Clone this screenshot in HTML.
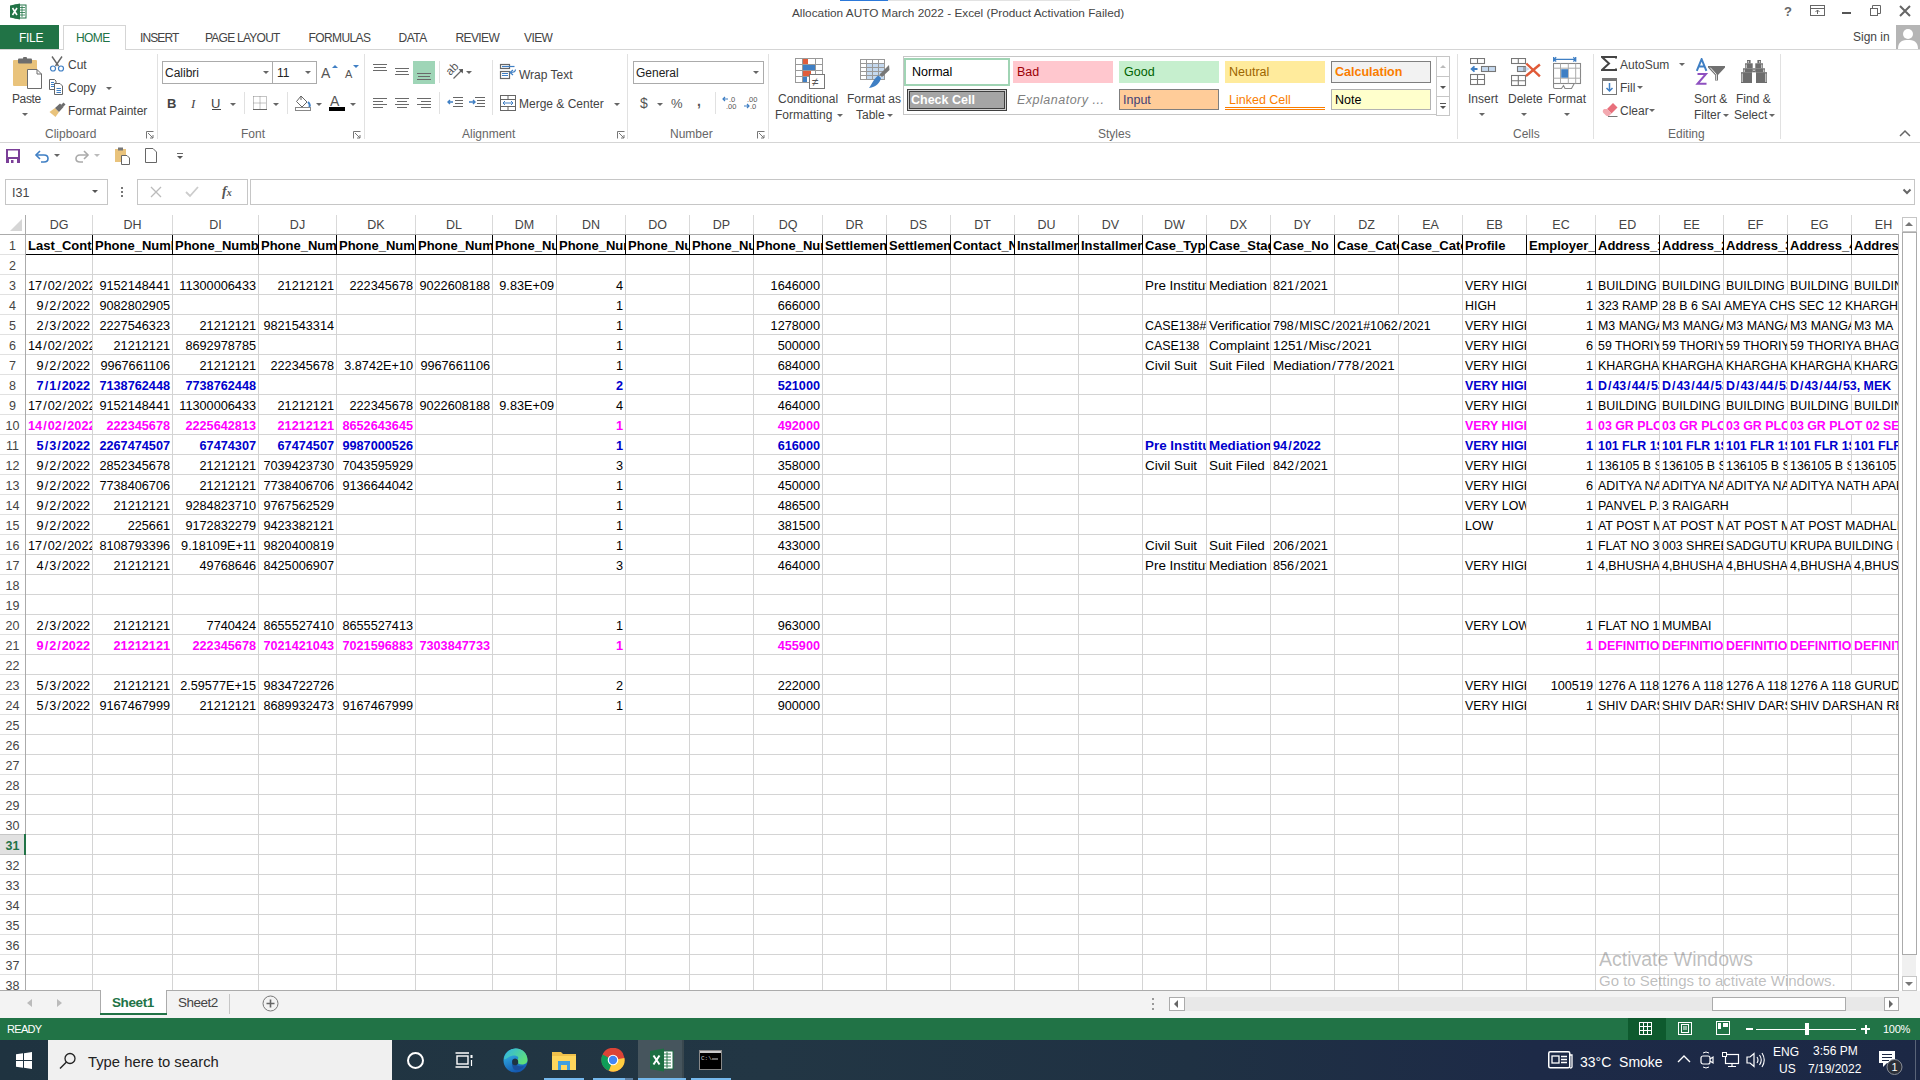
<!DOCTYPE html><html><head><meta charset="utf-8"><title>Excel</title><style>
*{margin:0;padding:0;box-sizing:content-box}
html,body{width:1920px;height:1080px;overflow:hidden;background:#fff;font-family:"Liberation Sans",sans-serif;position:relative}
.a{position:absolute;white-space:nowrap}
.t{position:absolute;white-space:nowrap;font-size:12px;color:#444;line-height:14px}
.vl{position:absolute;width:1px}
.hl{position:absolute;height:1px}
.ch{position:absolute;top:0;height:19px;line-height:20px;text-align:center;font-size:12.5px;color:#444;overflow:hidden}
.rh{position:absolute;left:0;width:25px;height:19px;line-height:22px;text-align:center;font-size:12.5px;color:#444}
.cell{position:absolute;height:19px;overflow:hidden;white-space:nowrap;font-size:12.7px;line-height:23px}
.cell.lc{font-size:13.4px;line-height:22px}
.cell.uc{font-size:12.4px;line-height:23px}
.cell .tl{display:inline-block;background:#fff;padding-left:2px;padding-right:1px;height:19px;vertical-align:top}
.cell.r{text-align:right}
.cell .tr{padding-right:2px}
.b{font-weight:bold}
.sl{padding:0 1px}
.sep{position:absolute;width:1px;background:#e1e1e1}
.dd{position:absolute;width:0;height:0;border-left:3px solid transparent;border-right:3px solid transparent;border-top:3px solid #555}
.box{position:absolute;border:1px solid #ababab;background:#fff}
</style></head><body>
<div class="a" style="left:840px;top:0;width:48px;height:1px;background:#2b78d9"></div>
<div class="a" style="left:888px;top:0;width:192px;height:1px;background:#e3e3e3"></div>
<svg class="a" style="left:10px;top:3px" width="17" height="17" viewBox="0 0 17 17">
<rect x="5" y="2" width="11" height="13" fill="#fff" stroke="#217346" stroke-width="1"/>
<path d="M9 4.5h6M9 7h6M9 9.5h6M9 12h6M12 3v11" stroke="#217346" stroke-width="0.8"/>
<path d="M0 2.5L10 0.5V16.5L0 14.5Z" fill="#217346"/>
<path d="M2.5 5L7 12M7 5L2.5 12" stroke="#fff" stroke-width="1.6"/>
</svg>
<div class="a" style="left:792px;top:6px;font-size:11.8px;line-height:14px;color:#444;">Allocation AUTO March 2022 - Excel (Product Activation Failed)</div>
<div class="a" style="left:1784px;top:4px;font-size:13px;line-height:15px;color:#666;font-weight:bold">?</div>
<svg class="a" style="left:1810px;top:5px" width="16" height="12"><rect x="0.5" y="0.5" width="14" height="10" fill="none" stroke="#666"/><path d="M0.5 3.5H14.5" stroke="#666"/><path d="M7.5 9V5M5.5 7L7.5 5L9.5 7" fill="none" stroke="#666"/></svg>
<div class="a" style="left:1842px;top:12px;width:9px;height:2px;background:#555"></div>
<svg class="a" style="left:1870px;top:5px" width="11" height="11"><rect x="0.5" y="3.5" width="7" height="7" fill="none" stroke="#666"/><path d="M2.5 3.5V0.5H10.5V8.5H7.5" fill="none" stroke="#666"/></svg>
<svg class="a" style="left:1899px;top:5px" width="13" height="12"><path d="M1 1L11 11M11 1L1 11" stroke="#666" stroke-width="2"/></svg>
<div class="a" style="left:0;top:25px;width:59px;height:24px;background:#217346"></div>
<div class="a" style="left:19px;top:31px;font-size:12px;line-height:14px;color:#fff;letter-spacing:-0.3px">FILE</div>
<div class="a" style="left:63px;top:25px;width:61px;height:24px;border:1px solid #d5d5d5;border-bottom:none;background:#fff"></div>
<div class="a" style="left:0;top:49px;width:63px;height:1px;background:#d5d5d5"></div>
<div class="a" style="left:125px;top:49px;width:1795px;height:1px;background:#d5d5d5"></div>
<div class="a" style="left:76px;top:31px;font-size:12px;line-height:14px;color:#217346;letter-spacing:-0.6px">HOME</div>
<div class="a" style="left:140px;top:31px;font-size:12px;line-height:14px;color:#444;letter-spacing:-0.9px">INSERT</div>
<div class="a" style="left:205px;top:31px;font-size:12px;line-height:14px;color:#444;letter-spacing:-0.75px">PAGE LAYOUT</div>
<div class="a" style="left:308.5px;top:31px;font-size:12px;line-height:14px;color:#444;letter-spacing:-0.6px">FORMULAS</div>
<div class="a" style="left:398.5px;top:31px;font-size:12px;line-height:14px;color:#444;letter-spacing:-0.5px">DATA</div>
<div class="a" style="left:455.5px;top:31px;font-size:12px;line-height:14px;color:#444;letter-spacing:-0.6px">REVIEW</div>
<div class="a" style="left:524px;top:31px;font-size:12px;line-height:14px;color:#444;letter-spacing:-0.6px">VIEW</div>
<div class="a" style="left:1853px;top:30px;font-size:12px;line-height:14px;color:#444;">Sign in</div>
<svg class="a" style="left:1896px;top:25px" width="24" height="24"><rect width="24" height="24" fill="#b5b5b5"/><circle cx="12" cy="9" r="5" fill="#fff"/><path d="M2 24C2 16 7 15 12 15S22 16 22 24Z" fill="#fff"/></svg>
<div class="a" style="left:0;top:142px;width:1920px;height:1px;background:#d5d5d5"></div>
<div class="sep" style="left:157px;top:54px;height:85px"></div>
<div class="sep" style="left:364px;top:54px;height:85px"></div>
<div class="sep" style="left:627px;top:54px;height:85px"></div>
<div class="sep" style="left:768px;top:54px;height:85px"></div>
<div class="sep" style="left:1457px;top:54px;height:85px"></div>
<div class="sep" style="left:1593px;top:54px;height:85px"></div>
<div class="sep" style="left:1780px;top:54px;height:85px"></div>
<svg class="a" style="left:12px;top:57px" width="32" height="33" viewBox="0 0 32 33">
<rect x="1" y="3" width="24" height="26" rx="1" fill="#e9c37c"/>
<rect x="6" y="1.5" width="14" height="5" rx="1" fill="#6d6d6d"/><rect x="11" y="0" width="4" height="3" rx="1" fill="#6d6d6d"/>
<path d="M15.5 12.5H25L29.5 17V31.5H15.5Z" fill="#fff" stroke="#6d6d6d"/><path d="M25 12.5V17H29.5" fill="none" stroke="#6d6d6d"/>
</svg>
<div class="a" style="left:12px;top:92px;font-size:12px;line-height:14px;color:#444;letter-spacing:-0.4px">Paste</div>
<div class="dd" style="left:22px;top:113px;border-top-color:#666"></div>
<svg class="a" style="left:49px;top:56px" width="16" height="16" viewBox="0 0 16 16">
<path d="M3 0.5L9.5 10M13 0.5L6.5 10" stroke="#666" stroke-width="1.4"/>
<circle cx="4" cy="12.5" r="2.5" fill="none" stroke="#3f7fc4" stroke-width="1.2"/><circle cx="12" cy="12.5" r="2.5" fill="none" stroke="#3f7fc4" stroke-width="1.2"/>
</svg>
<div class="a" style="left:68px;top:58px;font-size:12px;line-height:14px;color:#444;">Cut</div>
<svg class="a" style="left:48px;top:79px" width="17" height="16" viewBox="0 0 17 16">
<path d="M1.5 0.5H6.5L8 2V10.5H1.5Z" fill="#fff" stroke="#666"/>
<path d="M3 3.5H6M3 5.5H6M3 7.5H6" stroke="#3f7fc4"/>
<path d="M6.5 4.5H12L14.5 7V15.5H6.5Z" fill="#fff" stroke="#666"/>
<path d="M8.5 9.5H13M8.5 11.5H13M8.5 13.5H13" stroke="#3f7fc4"/>
</svg>
<div class="a" style="left:68px;top:81px;font-size:12px;line-height:14px;color:#444;">Copy</div>
<div class="dd" style="left:106px;top:87px;border-top-color:#666"></div>
<svg class="a" style="left:49px;top:102px" width="17" height="16" viewBox="0 0 17 16">
<path d="M0.5 10L6 6L10 10L6.5 15Z" fill="#e9c37c"/>
<path d="M6 6L11 1.5L14.5 5L10 10Z" fill="#6d6d6d"/>
<path d="M12 3L14.5 0.5L16.5 2.5L14 5Z" fill="#6d6d6d"/>
</svg>
<div class="a" style="left:68px;top:104px;font-size:12px;line-height:14px;color:#444;">Format Painter</div>
<div class="a" style="left:45px;top:127px;font-size:12px;line-height:14px;color:#666;">Clipboard</div>
<svg class="a" style="left:146px;top:131px" width="8" height="8"><path d="M0.5 7.5V0.5H7.5" fill="none" stroke="#777"/><path d="M2 2L7 7M4 7H7V4" fill="none" stroke="#777"/></svg>
<div class="box" style="left:162px;top:61px;width:110px;height:21px"></div>
<div class="box" style="left:272px;top:61px;width:43px;height:21px"></div>
<div class="a" style="left:165px;top:66px;font-size:12px;line-height:14px;color:#222;">Calibri</div>
<div class="dd" style="left:263px;top:71px;border-top-color:#666"></div>
<div class="dd" style="left:305px;top:71px;border-top-color:#666"></div>
<div class="a" style="left:277px;top:66px;font-size:12px;line-height:14px;color:#222;">11</div>
<div class="a" style="left:321px;top:65px;font-size:14px;line-height:16px;color:#555;">A</div>
<div class="dd" style="left:332px;top:65px;border-top:none;border-bottom:3px solid #3f7fc4"></div>
<div class="a" style="left:345px;top:68px;font-size:11px;line-height:13px;color:#555;">A</div>
<div class="dd" style="left:353px;top:65px;border-top-color:#3f7fc4"></div>
<div class="a" style="left:167px;top:96px;font-size:13px;line-height:15px;color:#444;font-weight:bold">B</div>
<div class="a" style="left:191px;top:96px;font-size:13px;line-height:15px;color:#444;font-style:italic;font-family:Liberation Serif">I</div>
<div class="a" style="left:211px;top:96px;font-size:13px;line-height:15px;color:#444;">U</div>
<div class="a" style="left:212px;top:109px;width:9px;height:1px;background:#444"></div>
<div class="dd" style="left:230px;top:103px;border-top-color:#666"></div>
<div class="sep" style="left:244px;top:92px;height:22px"></div>
<svg class="a" style="left:253px;top:96px" width="14" height="14"><path d="M0.5 0.5H13.5V13.5M0.5 0.5V13.5M7 0.5V13M0.5 7H13" fill="none" stroke="#888" stroke-dasharray="1 1"/><path d="M0 13.5H14" stroke="#666"/></svg>
<div class="dd" style="left:273px;top:103px;border-top-color:#666"></div>
<div class="sep" style="left:287px;top:92px;height:22px"></div>
<svg class="a" style="left:295px;top:95px" width="17" height="17"><path d="M6 1L12 7L7 12L1.5 6.5Z" fill="#fff" stroke="#666"/><path d="M6 1V5" stroke="#666"/><path d="M13 7C15 9 15 11 14 12" stroke="#3f7fc4" stroke-width="2" fill="none"/><rect x="0.5" y="12.5" width="15" height="3" fill="none" stroke="#888"/></svg>
<div class="dd" style="left:316px;top:103px;border-top-color:#666"></div>
<div class="a" style="left:330px;top:93px;font-size:14px;line-height:16px;color:#555;">A</div>
<div class="a" style="left:329px;top:107px;width:16px;height:4px;background:#000"></div>
<div class="dd" style="left:350px;top:103px;border-top-color:#666"></div>
<div class="a" style="left:241px;top:127px;font-size:12px;line-height:14px;color:#666;">Font</div>
<svg class="a" style="left:353px;top:131px" width="8" height="8"><path d="M0.5 7.5V0.5H7.5" fill="none" stroke="#777"/><path d="M2 2L7 7M4 7H7V4" fill="none" stroke="#777"/></svg>
<svg class="a" style="left:373px;top:64px" width="15" height="10"><path d="M0 0.5H14" stroke="#6a6a6a"/><path d="M1 3.5H13" stroke="#6a6a6a"/><path d="M0 6.5H14" stroke="#6a6a6a"/></svg>
<svg class="a" style="left:395px;top:68px" width="15" height="10"><path d="M0 0.5H14" stroke="#6a6a6a"/><path d="M1 3.5H13" stroke="#6a6a6a"/><path d="M0 6.5H14" stroke="#6a6a6a"/></svg>
<div class="a" style="left:413px;top:61px;width:22px;height:23px;background:#9fd5b7"></div>
<svg class="a" style="left:417px;top:73px" width="15" height="10"><path d="M0 0.5H14" stroke="#6a6a6a"/><path d="M1 3.5H13" stroke="#6a6a6a"/><path d="M0 6.5H14" stroke="#6a6a6a"/></svg>
<div class="sep" style="left:439px;top:61px;height:22px"></div>
<svg class="a" style="left:445px;top:62px" width="20" height="20"><text x="2.5" y="13.5" font-size="11.5" fill="#555" font-family="Liberation Sans" transform="translate(-1.8 -1.8) rotate(-45 7.5 9)">ab</text><path d="M8.5 16.5L17 8" stroke="#666" stroke-width="1.2"/><path d="M13.5 7.2L18 7L17.8 11.5Z" fill="#555"/></svg>
<div class="dd" style="left:466px;top:71px;border-top-color:#666"></div>
<svg class="a" style="left:373px;top:98px" width="15" height="13"><path d="M0 0.5H14" stroke="#6a6a6a"/><path d="M0 3.5H10" stroke="#6a6a6a"/><path d="M0 6.5H14" stroke="#6a6a6a"/><path d="M0 9.5H10" stroke="#6a6a6a"/></svg>
<svg class="a" style="left:395px;top:98px" width="15" height="13"><path d="M0 0.5H14" stroke="#6a6a6a"/><path d="M2 3.5H12" stroke="#6a6a6a"/><path d="M0 6.5H14" stroke="#6a6a6a"/><path d="M2 9.5H12" stroke="#6a6a6a"/></svg>
<svg class="a" style="left:417px;top:98px" width="15" height="13"><path d="M0 0.5H14" stroke="#6a6a6a"/><path d="M4 3.5H14" stroke="#6a6a6a"/><path d="M0 6.5H14" stroke="#6a6a6a"/><path d="M4 9.5H14" stroke="#6a6a6a"/></svg>
<div class="sep" style="left:439px;top:92px;height:22px"></div>
<svg class="a" style="left:447px;top:97px" width="17" height="12"><path d="M6 0.5H16M8 3.5H16M8 6.5H16M6 9.5H16" stroke="#666"/><path d="M1 5H6M3 3L1 5L3 7" fill="none" stroke="#3f7fc4" stroke-width="1.4"/></svg>
<svg class="a" style="left:469px;top:97px" width="17" height="12"><path d="M6 0.5H16M8 3.5H16M8 6.5H16M6 9.5H16" stroke="#666"/><path d="M0 5H6M4 3L6 5L4 7" fill="none" stroke="#3f7fc4" stroke-width="1.4"/></svg>
<div class="sep" style="left:492px;top:60px;height:55px"></div>
<svg class="a" style="left:499px;top:63px" width="18" height="17"><rect x="1.5" y="1.5" width="9" height="4" fill="none" stroke="#666" stroke-width="1.2"/><path d="M3 3.5H15.5" stroke="#3f7fc4" stroke-width="1.2"/><rect x="1.5" y="8.5" width="9" height="7" fill="none" stroke="#666" stroke-width="1.2"/><path d="M3 10.5H9M3 12.5H9" stroke="#3f7fc4" stroke-width="1.1"/><path d="M16.5 6.5C16.5 9 15 9.5 11.5 9.5" fill="none" stroke="#3f7fc4" stroke-width="1.2"/><path d="M14 7L11 9.5L14 12" fill="none" stroke="#3f7fc4" stroke-width="1.2"/></svg>
<div class="a" style="left:519px;top:68px;font-size:12px;line-height:14px;color:#444;">Wrap Text</div>
<svg class="a" style="left:500px;top:95px" width="16" height="16"><rect x="0.5" y="0.5" width="15" height="15" fill="none" stroke="#666"/><path d="M0.5 4.5H15.5M0.5 11.5H15.5M8 0.5V4.5M8 11.5V15.5" stroke="#666"/><path d="M3 8H13M5 6L3 8L5 10M11 6L13 8L11 10" fill="none" stroke="#3f7fc4"/></svg>
<div class="a" style="left:519px;top:97px;font-size:12px;line-height:14px;color:#444;">Merge &amp; Center</div>
<div class="dd" style="left:614px;top:103px;border-top-color:#666"></div>
<div class="a" style="left:462px;top:127px;font-size:12px;line-height:14px;color:#666;">Alignment</div>
<svg class="a" style="left:617px;top:131px" width="8" height="8"><path d="M0.5 7.5V0.5H7.5" fill="none" stroke="#777"/><path d="M2 2L7 7M4 7H7V4" fill="none" stroke="#777"/></svg>
<div class="box" style="left:633px;top:61px;width:129px;height:21px"></div>
<div class="a" style="left:636px;top:66px;font-size:12px;line-height:14px;color:#222;">General</div>
<div class="dd" style="left:753px;top:71px;border-top-color:#666"></div>
<div class="a" style="left:640px;top:95px;font-size:14px;line-height:16px;color:#555;">$</div>
<div class="dd" style="left:657px;top:103px;border-top-color:#666"></div>
<div class="a" style="left:671px;top:96px;font-size:13px;line-height:15px;color:#555;">%</div>
<div class="a" style="left:697px;top:93px;font-size:14px;line-height:16px;color:#555;font-weight:bold">,</div>
<div class="sep" style="left:715px;top:92px;height:22px"></div>
<svg class="a" style="left:722px;top:95px" width="16" height="16"><path d="M1 4H6M3 2L1 4L3 6" fill="none" stroke="#3f7fc4" stroke-width="1.2"/><text x="7" y="7" font-size="7.5" fill="#555" font-family="Liberation Sans">.0</text><text x="4" y="14" font-size="7.5" fill="#555" font-family="Liberation Sans">.00</text></svg>
<svg class="a" style="left:743px;top:95px" width="17" height="16"><text x="4" y="7" font-size="7.5" fill="#555" font-family="Liberation Sans">.00</text><path d="M1 11H6M4 9L6 11L4 13" fill="none" stroke="#3f7fc4" stroke-width="1.2"/><text x="7" y="14" font-size="7.5" fill="#555" font-family="Liberation Sans">.0</text></svg>
<div class="a" style="left:670px;top:127px;font-size:12px;line-height:14px;color:#666;">Number</div>
<svg class="a" style="left:757px;top:131px" width="8" height="8"><path d="M0.5 7.5V0.5H7.5" fill="none" stroke="#777"/><path d="M2 2L7 7M4 7H7V4" fill="none" stroke="#777"/></svg>
<svg class="a" style="left:795px;top:58px" width="31" height="32"><g stroke="#999" fill="none"><rect x="0.5" y="0.5" width="27" height="24"/><path d="M0.5 6.5H27.5M0.5 12.5H27.5M0.5 18.5H27.5M7.5 0.5V24.5M20.5 0.5V24.5"/></g>
<rect x="8" y="1" width="5" height="5" fill="#e15d3b"/><rect x="8" y="7" width="12" height="5" fill="#3f7fc4"/><rect x="8" y="13" width="8" height="5" fill="#e15d3b"/><rect x="8" y="19" width="4" height="5" fill="#3f7fc4"/>
<rect x="14.5" y="16.5" width="15" height="14" fill="#fff" stroke="#777"/><text x="17" y="28" font-size="12" fill="#555" font-family="Liberation Sans">≠</text></svg>
<div class="a" style="left:778px;top:92px;font-size:12px;line-height:14px;color:#444;">Conditional</div>
<div class="a" style="left:775px;top:108px;font-size:12px;line-height:14px;color:#444;">Formatting</div>
<div class="dd" style="left:837px;top:114px;border-top-color:#666"></div>
<svg class="a" style="left:860px;top:59px" width="30" height="30"><rect x="0.5" y="0.5" width="24" height="20" fill="#fff" stroke="#999"/><rect x="6" y="5" width="18" height="15" fill="#c5d9ef"/><g stroke="#999"><path d="M0.5 4.5H24.5M0.5 8.5H24.5M0.5 12.5H24.5M0.5 16.5H24.5M6.5 0.5V20.5M12.5 0.5V20.5M18.5 0.5V20.5"/></g><path d="M29 6L29.5 11L22 18L19.5 15.5Z" fill="#777"/><path d="M18.5 16.5L21 19C20 24 16 28 9 29C12 25 14 19 18.5 16.5Z" fill="#3f7fc4"/></svg>
<div class="a" style="left:847px;top:92px;font-size:12px;line-height:14px;color:#444;">Format as</div>
<div class="a" style="left:856px;top:108px;font-size:12px;line-height:14px;color:#444;">Table</div>
<div class="dd" style="left:887px;top:114px;border-top-color:#666"></div>
<div class="a" style="left:903px;top:56px;width:546px;height:59px;border:1px solid #c6c6c6;background:#fff;box-sizing:border-box"></div>
<div class="a" style="left:904px;top:58px;width:102px;height:24px;border:2px solid #a0d4b4;background:#fff"></div>
<div class="a" style="left:912px;top:65px;font-size:12.5px;line-height:14px;color:#000;">Normal</div>
<div class="a" style="left:1013px;top:61px;width:100px;height:22px;background:#ffc7ce"></div>
<div class="a" style="left:1017px;top:65px;font-size:12.5px;line-height:14px;color:#9c0006;">Bad</div>
<div class="a" style="left:1119px;top:61px;width:100px;height:22px;background:#c6efce"></div>
<div class="a" style="left:1124px;top:65px;font-size:12.5px;line-height:14px;color:#006100;">Good</div>
<div class="a" style="left:1225px;top:61px;width:100px;height:22px;background:#ffeb9c"></div>
<div class="a" style="left:1229px;top:65px;font-size:12.5px;line-height:14px;color:#9c6500;">Neutral</div>
<div class="a" style="left:1331px;top:61px;width:98px;height:20px;background:#f2f2f2;border:1px solid #7f7f7f"></div>
<div class="a" style="left:1335px;top:65px;font-size:12.5px;line-height:14px;color:#fa7d00;font-weight:bold">Calculation</div>
<div class="a" style="left:907px;top:89px;width:98px;height:20px;background:#a5a5a5;border:1px solid #3f3f3f;box-shadow:inset 0 0 0 1px #d0d0d0,inset 0 0 0 2px #3f3f3f"></div>
<div class="a" style="left:911px;top:93px;font-size:12.5px;line-height:14px;color:#fff;font-weight:bold">Check Cell</div>
<div class="a" style="left:1017px;top:93px;font-size:12.5px;line-height:14px;color:#7f7f7f;font-style:italic;letter-spacing:0.5px">Explanatory ...</div>
<div class="a" style="left:1119px;top:89px;width:98px;height:19px;background:#ffcc99;border:1px solid #7f7f7f"></div>
<div class="a" style="left:1123px;top:93px;font-size:12.5px;line-height:14px;color:#3f3f76;">Input</div>
<div class="a" style="left:1229px;top:93px;font-size:12.5px;line-height:14px;color:#fa7d00;">Linked Cell</div>
<div class="a" style="left:1225px;top:107px;width:100px;height:3px;border-top:1px solid #fa7d00;border-bottom:1px solid #fa7d00;box-sizing:border-box"></div>
<div class="a" style="left:1331px;top:89px;width:98px;height:19px;background:#ffffcc;border:1px solid #b2b2b2"></div>
<div class="a" style="left:1335px;top:93px;font-size:12.5px;line-height:14px;color:#000;">Note</div>
<div class="a" style="left:1436px;top:56px;width:12px;height:58px;border:1px solid #c6c6c6;background:#fff"></div>
<div class="a" style="left:1436px;top:76px;width:14px;height:1px;background:#c6c6c6"></div>
<div class="a" style="left:1436px;top:96px;width:14px;height:1px;background:#c6c6c6"></div>
<div class="dd" style="left:1440px;top:65px;border-top:none;border-bottom:3px solid #bbb"></div>
<div class="dd" style="left:1440px;top:86px;border-top-color:#555"></div>
<div class="a" style="left:1440px;top:103px;width:6px;height:1px;background:#555"></div>
<div class="dd" style="left:1440px;top:106px;border-top-color:#555"></div>
<div class="a" style="left:1098px;top:127px;font-size:12px;line-height:14px;color:#666;">Styles</div>
<svg class="a" style="left:1470px;top:58px" width="27" height="28"><g fill="none" stroke="#777" stroke-width="1.1"><rect x="0.5" y="0.5" width="14" height="5"/><path d="M7.5 0.5V5.5"/><rect x="0.5" y="16.5" width="14" height="10"/><path d="M7.5 16.5V26.5M0.5 21.5H14.5"/></g><rect x="11.5" y="8.5" width="14" height="5" fill="#c5d9ef" stroke="#777" stroke-width="1.1"/><path d="M18.5 8.5V13.5" stroke="#777"/><path d="M2 11H7.5M4.5 8.3L1.6 11L4.5 13.7" fill="none" stroke="#3f7fc4" stroke-width="1.8"/></svg>
<div class="a" style="left:1468px;top:92px;font-size:12px;line-height:14px;color:#444;">Insert</div>
<div class="dd" style="left:1479px;top:113px;border-top-color:#666"></div>
<svg class="a" style="left:1511px;top:58px" width="31" height="29"><g fill="none" stroke="#777" stroke-width="1.1"><rect x="0.5" y="0.5" width="14" height="5"/><path d="M7.3 0.5V5.5"/><rect x="0.5" y="17.5" width="14" height="10"/><path d="M7.3 17.5V27.5M0.5 22.7H14.5"/></g><rect x="6.5" y="8.5" width="8" height="5" fill="#c5d9ef" stroke="#777" stroke-width="1.1"/><path d="M14.6 8.5L18.7 11L14.6 13.5Z" fill="#c5d9ef"/><path d="M13 8.5V13.5" stroke="#777"/><path d="M15.3 5.5L28.9 18.3M28.9 6.5L15 18" stroke="#e05a38" stroke-width="2.4"/></svg>
<div class="a" style="left:1508px;top:92px;font-size:12px;line-height:14px;color:#444;">Delete</div>
<div class="dd" style="left:1521px;top:113px;border-top-color:#666"></div>
<svg class="a" style="left:1553px;top:56px" width="29" height="34"><path d="M0.5 3.4H23M0.6 1V5.8M22.7 1V5.8M3.2 1.3L0.9 3.4L3.2 5.5M20.3 1.3L22.6 3.4L20.3 5.5" fill="none" stroke="#3f7fc4" stroke-width="1.3"/><rect x="0.5" y="7.5" width="27" height="20" fill="#fff" stroke="#888" stroke-width="1.1"/><path d="M7.5 7.5V27.5M15.3 7.5V27.5M22.7 7.5V27.5M0.5 12.2H27.5M0.5 22.2H27.5" stroke="#aaa"/><rect x="8.2" y="13.2" width="6.8" height="8.5" fill="#3f7fc4"/><path d="M0.5 27.5V31C0.5 32 1 32.5 2 32.5H8.5L10.5 29.5L12 32.5H18.5L21 28" fill="none" stroke="#888" stroke-width="1.1"/></svg>
<div class="a" style="left:1548px;top:92px;font-size:12px;line-height:14px;color:#444;">Format</div>
<div class="dd" style="left:1564px;top:113px;border-top-color:#666"></div>
<div class="a" style="left:1513px;top:127px;font-size:12px;line-height:14px;color:#666;">Cells</div>
<svg class="a" style="left:1601px;top:56px" width="16" height="15"><path d="M15 2.5V1H1L8 7.5L1 14H15V12.5" fill="none" stroke="#444" stroke-width="2"/></svg>
<div class="a" style="left:1620px;top:58px;font-size:12px;line-height:14px;color:#444;">AutoSum</div>
<div class="dd" style="left:1679px;top:63px;border-top-color:#666"></div>
<svg class="a" style="left:1602px;top:78px" width="15" height="18"><rect x="0.5" y="0.5" width="14" height="16" fill="#fff" stroke="#777"/><rect x="0" y="0" width="15" height="3" fill="#777"/><path d="M7.5 5V13M4.5 10L7.5 13L10.5 10" fill="none" stroke="#3f7fc4" stroke-width="1.5"/></svg>
<div class="a" style="left:1620px;top:81px;font-size:12px;line-height:14px;color:#444;">Fill</div>
<div class="dd" style="left:1637px;top:86px;border-top-color:#666"></div>
<svg class="a" style="left:1602px;top:102px" width="17" height="15"><path d="M5 7L11 1L15.5 5.5L9.5 11.5Z" fill="#e8707c"/><path d="M5 7L9.5 11.5L7.5 13.5C6.5 14.5 5 14.5 4 13.5L1.5 11C0.5 10 0.5 8.5 1.5 7.5L2 7Z" fill="#f3a9b0"/><path d="M6 14.5H15.5" stroke="#777"/></svg>
<div class="a" style="left:1620px;top:104px;font-size:12px;line-height:14px;color:#444;">Clear</div>
<div class="dd" style="left:1649px;top:109px;border-top-color:#666"></div>
<svg class="a" style="left:1695px;top:58px" width="32" height="30"><path d="M1.8 12.8L6.6 1.2L11.4 12.8M3.6 8.6H9.6" fill="none" stroke="#3f7fc4" stroke-width="2"/><path d="M2.5 16H11L2.5 25.8H11.5" fill="none" stroke="#8e50c0" stroke-width="2"/><path d="M13 8H30V9.5L23 17V22.5H20V17L13 9.5Z" fill="#707070"/><path d="M15.2 9.6L21.3 16.3V22" fill="none" stroke="#fff" stroke-width="0.9"/></svg>
<div class="a" style="left:1694px;top:92px;font-size:12px;line-height:14px;color:#444;">Sort &amp;</div>
<div class="a" style="left:1694px;top:108px;font-size:12px;line-height:14px;color:#444;">Filter</div>
<div class="dd" style="left:1723px;top:114px;border-top-color:#666"></div>
<svg class="a" style="left:1740px;top:59px" width="28" height="25"><g fill="#6d6d6d"><rect x="7" y="1" width="3.6" height="3.4"/><rect x="5" y="4.3" width="7.7" height="5.1"/><rect x="3" y="9.3" width="9.7" height="4"/><rect x="1" y="13.2" width="11" height="10.8"/><rect x="17.4" y="1" width="3.6" height="3.4"/><rect x="15.3" y="4.3" width="7.7" height="5.1"/><rect x="15.3" y="9.3" width="9.7" height="4"/><rect x="16" y="13.2" width="11" height="10.8"/><rect x="12.5" y="9.3" width="3" height="4"/></g><g stroke="#fff" stroke-width="0.8"><path d="M2.2 14.5V23M4.2 10.5V13M6.2 5.5V9M8.3 2V3.8M25.8 14.5V23M23.8 10.5V13M21.8 5.5V9M19.7 2V3.8M13 11.2H15"/></g></svg>
<div class="a" style="left:1736px;top:92px;font-size:12px;line-height:14px;color:#444;">Find &amp;</div>
<div class="a" style="left:1734px;top:108px;font-size:12px;line-height:14px;color:#444;">Select</div>
<div class="dd" style="left:1769px;top:114px;border-top-color:#666"></div>
<div class="a" style="left:1668px;top:127px;font-size:12px;line-height:14px;color:#666;">Editing</div>
<svg class="a" style="left:1899px;top:129px" width="12" height="8"><path d="M1 7L6 2L11 7" fill="none" stroke="#666" stroke-width="1.5"/></svg>
<svg class="a" style="left:6px;top:149px" width="15" height="15"><path d="M0 0H14V14H0Z" fill="#7b3f98"/><rect x="2" y="1.5" width="10" height="6.5" fill="#fff"/><rect x="3" y="10" width="8" height="4" fill="#fff"/><rect x="5" y="11" width="2.5" height="3" fill="#7b3f98"/></svg>
<svg class="a" style="left:34px;top:148px" width="16" height="15"><path d="M3 7H10C13 7 14 9 14 10.5C14 13 12 14 10 14H7" fill="none" stroke="#3f7fc4" stroke-width="1.6"/><path d="M6 3L2 7L6 11" fill="none" stroke="#3f7fc4" stroke-width="1.6"/></svg>
<div class="dd" style="left:54px;top:154px;border-top-color:#666"></div>
<svg class="a" style="left:74px;top:148px" width="16" height="15"><path d="M13 7H6C3 7 2 9 2 10.5C2 13 4 14 6 14H9" fill="none" stroke="#aaa" stroke-width="1.6"/><path d="M10 3L14 7L10 11" fill="none" stroke="#aaa" stroke-width="1.6"/></svg>
<div class="dd" style="left:94px;top:154px;border-top-color:#bbb"></div>
<svg class="a" style="left:114px;top:147px" width="17" height="18"><rect x="1" y="2" width="11" height="13" fill="#e9c37c"/><rect x="4" y="0.5" width="5" height="3" fill="#777"/><path d="M7.5 8.5H13L15.5 11V17.5H7.5Z" fill="#fff" stroke="#666"/></svg>
<svg class="a" style="left:145px;top:148px" width="12" height="15"><path d="M0.5 0.5H8L11.5 4V14.5H0.5Z" fill="#fff" stroke="#666"/></svg>
<svg class="a" style="left:176px;top:152px" width="8" height="8"><path d="M1 1.5H7" stroke="#666"/><path d="M1 4H7L4 7Z" fill="#555"/></svg>
<div class="a" style="left:5px;top:179px;width:101px;height:24px;border:1px solid #c6c6c6;background:#fff"></div>
<div class="a" style="left:12px;top:186px;font-size:12.5px;line-height:14px;color:#444;">I31</div>
<div class="dd" style="left:92px;top:190px;border-top-color:#555"></div>
<div class="a" style="left:121px;top:187px;width:2px;height:2px;background:#777"></div><div class="a" style="left:121px;top:191px;width:2px;height:2px;background:#777"></div><div class="a" style="left:121px;top:195px;width:2px;height:2px;background:#777"></div>
<div class="a" style="left:137px;top:179px;width:109px;height:24px;border:1px solid #c6c6c6;background:#fff"></div>
<svg class="a" style="left:150px;top:186px" width="12" height="12"><path d="M1 1L11 11M11 1L1 11" stroke="#bbb" stroke-width="1.3"/></svg>
<svg class="a" style="left:185px;top:186px" width="14" height="12"><path d="M1 6L5 10L13 1" fill="none" stroke="#ccc" stroke-width="1.8"/></svg>
<div class="a" style="left:222px;top:184px;font-size:14px;line-height:16px;color:#555;font-style:italic;font-family:Liberation Serif;font-weight:bold">f<span style="font-size:10px">x</span></div>
<div class="a" style="left:250px;top:179px;width:1663px;height:24px;border:1px solid #c6c6c6;background:#fff"></div>
<svg class="a" style="left:1902px;top:188px" width="10" height="8"><path d="M1.5 1.5L5 5L8.5 1.5" fill="none" stroke="#666" stroke-width="2"/></svg>
<div id="grid" style="position:absolute;left:0;top:215px;width:1899px;height:776px;overflow:hidden;background:#fff">
<svg style="position:absolute;left:9px;top:3px" width="14" height="14"><polygon points="13,1 13,13 1,13" fill="#d6d6d6"/></svg>
<div class="ch" style="left:26px;width:66px">DG</div>
<div class="ch" style="left:93px;width:79px">DH</div>
<div class="vl" style="left:92px;top:0px;height:19px;background:#d9d9d9"></div>
<div class="ch" style="left:173px;width:85px">DI</div>
<div class="vl" style="left:172px;top:0px;height:19px;background:#d9d9d9"></div>
<div class="ch" style="left:259px;width:77px">DJ</div>
<div class="vl" style="left:258px;top:0px;height:19px;background:#d9d9d9"></div>
<div class="ch" style="left:337px;width:78px">DK</div>
<div class="vl" style="left:336px;top:0px;height:19px;background:#d9d9d9"></div>
<div class="ch" style="left:416px;width:76px">DL</div>
<div class="vl" style="left:415px;top:0px;height:19px;background:#d9d9d9"></div>
<div class="ch" style="left:493px;width:63px">DM</div>
<div class="vl" style="left:492px;top:0px;height:19px;background:#d9d9d9"></div>
<div class="ch" style="left:557px;width:68px">DN</div>
<div class="vl" style="left:556px;top:0px;height:19px;background:#d9d9d9"></div>
<div class="ch" style="left:626px;width:63px">DO</div>
<div class="vl" style="left:625px;top:0px;height:19px;background:#d9d9d9"></div>
<div class="ch" style="left:690px;width:63px">DP</div>
<div class="vl" style="left:689px;top:0px;height:19px;background:#d9d9d9"></div>
<div class="ch" style="left:754px;width:68px">DQ</div>
<div class="vl" style="left:753px;top:0px;height:19px;background:#d9d9d9"></div>
<div class="ch" style="left:823px;width:63px">DR</div>
<div class="vl" style="left:822px;top:0px;height:19px;background:#d9d9d9"></div>
<div class="ch" style="left:887px;width:63px">DS</div>
<div class="vl" style="left:886px;top:0px;height:19px;background:#d9d9d9"></div>
<div class="ch" style="left:951px;width:63px">DT</div>
<div class="vl" style="left:950px;top:0px;height:19px;background:#d9d9d9"></div>
<div class="ch" style="left:1015px;width:63px">DU</div>
<div class="vl" style="left:1014px;top:0px;height:19px;background:#d9d9d9"></div>
<div class="ch" style="left:1079px;width:63px">DV</div>
<div class="vl" style="left:1078px;top:0px;height:19px;background:#d9d9d9"></div>
<div class="ch" style="left:1143px;width:63px">DW</div>
<div class="vl" style="left:1142px;top:0px;height:19px;background:#d9d9d9"></div>
<div class="ch" style="left:1207px;width:63px">DX</div>
<div class="vl" style="left:1206px;top:0px;height:19px;background:#d9d9d9"></div>
<div class="ch" style="left:1271px;width:63px">DY</div>
<div class="vl" style="left:1270px;top:0px;height:19px;background:#d9d9d9"></div>
<div class="ch" style="left:1335px;width:63px">DZ</div>
<div class="vl" style="left:1334px;top:0px;height:19px;background:#d9d9d9"></div>
<div class="ch" style="left:1399px;width:63px">EA</div>
<div class="vl" style="left:1398px;top:0px;height:19px;background:#d9d9d9"></div>
<div class="ch" style="left:1463px;width:63px">EB</div>
<div class="vl" style="left:1462px;top:0px;height:19px;background:#d9d9d9"></div>
<div class="ch" style="left:1527px;width:68px">EC</div>
<div class="vl" style="left:1526px;top:0px;height:19px;background:#d9d9d9"></div>
<div class="ch" style="left:1596px;width:63px">ED</div>
<div class="vl" style="left:1595px;top:0px;height:19px;background:#d9d9d9"></div>
<div class="ch" style="left:1660px;width:63px">EE</div>
<div class="vl" style="left:1659px;top:0px;height:19px;background:#d9d9d9"></div>
<div class="ch" style="left:1724px;width:63px">EF</div>
<div class="vl" style="left:1723px;top:0px;height:19px;background:#d9d9d9"></div>
<div class="ch" style="left:1788px;width:63px">EG</div>
<div class="vl" style="left:1787px;top:0px;height:19px;background:#d9d9d9"></div>
<div class="ch" style="left:1852px;width:63px">EH</div>
<div class="vl" style="left:1851px;top:0px;height:19px;background:#d9d9d9"></div>
<div class="hl" style="left:0;top:19px;width:1898px;background:#ababab"></div>
<div class="vl" style="left:25px;top:0px;height:775px;background:#ababab"></div>
<div class="vl" style="left:92px;top:20px;height:756px;background:#d4d4d4"></div>
<div class="vl" style="left:172px;top:20px;height:756px;background:#d4d4d4"></div>
<div class="vl" style="left:258px;top:20px;height:756px;background:#d4d4d4"></div>
<div class="vl" style="left:336px;top:20px;height:756px;background:#d4d4d4"></div>
<div class="vl" style="left:415px;top:20px;height:756px;background:#d4d4d4"></div>
<div class="vl" style="left:492px;top:20px;height:756px;background:#d4d4d4"></div>
<div class="vl" style="left:556px;top:20px;height:756px;background:#d4d4d4"></div>
<div class="vl" style="left:625px;top:20px;height:756px;background:#d4d4d4"></div>
<div class="vl" style="left:689px;top:20px;height:756px;background:#d4d4d4"></div>
<div class="vl" style="left:753px;top:20px;height:756px;background:#d4d4d4"></div>
<div class="vl" style="left:822px;top:20px;height:756px;background:#d4d4d4"></div>
<div class="vl" style="left:886px;top:20px;height:756px;background:#d4d4d4"></div>
<div class="vl" style="left:950px;top:20px;height:756px;background:#d4d4d4"></div>
<div class="vl" style="left:1014px;top:20px;height:756px;background:#d4d4d4"></div>
<div class="vl" style="left:1078px;top:20px;height:756px;background:#d4d4d4"></div>
<div class="vl" style="left:1142px;top:20px;height:756px;background:#d4d4d4"></div>
<div class="vl" style="left:1206px;top:20px;height:756px;background:#d4d4d4"></div>
<div class="vl" style="left:1270px;top:20px;height:756px;background:#d4d4d4"></div>
<div class="vl" style="left:1334px;top:20px;height:756px;background:#d4d4d4"></div>
<div class="vl" style="left:1398px;top:20px;height:756px;background:#d4d4d4"></div>
<div class="vl" style="left:1462px;top:20px;height:756px;background:#d4d4d4"></div>
<div class="vl" style="left:1526px;top:20px;height:756px;background:#d4d4d4"></div>
<div class="vl" style="left:1595px;top:20px;height:756px;background:#d4d4d4"></div>
<div class="vl" style="left:1659px;top:20px;height:756px;background:#d4d4d4"></div>
<div class="vl" style="left:1723px;top:20px;height:756px;background:#d4d4d4"></div>
<div class="vl" style="left:1787px;top:20px;height:756px;background:#d4d4d4"></div>
<div class="vl" style="left:1851px;top:20px;height:756px;background:#d4d4d4"></div>
<div class="hl" style="left:26px;top:39px;width:1872px;background:#d4d4d4"></div>
<div class="hl" style="left:0px;top:39px;width:25px;background:#e1e1e1"></div>
<div class="rh" style="top:20px">1</div>
<div class="hl" style="left:26px;top:59px;width:1872px;background:#d4d4d4"></div>
<div class="hl" style="left:0px;top:59px;width:25px;background:#e1e1e1"></div>
<div class="rh" style="top:40px">2</div>
<div class="hl" style="left:26px;top:79px;width:1872px;background:#d4d4d4"></div>
<div class="hl" style="left:0px;top:79px;width:25px;background:#e1e1e1"></div>
<div class="rh" style="top:60px">3</div>
<div class="hl" style="left:26px;top:99px;width:1872px;background:#d4d4d4"></div>
<div class="hl" style="left:0px;top:99px;width:25px;background:#e1e1e1"></div>
<div class="rh" style="top:80px">4</div>
<div class="hl" style="left:26px;top:119px;width:1872px;background:#d4d4d4"></div>
<div class="hl" style="left:0px;top:119px;width:25px;background:#e1e1e1"></div>
<div class="rh" style="top:100px">5</div>
<div class="hl" style="left:26px;top:139px;width:1872px;background:#d4d4d4"></div>
<div class="hl" style="left:0px;top:139px;width:25px;background:#e1e1e1"></div>
<div class="rh" style="top:120px">6</div>
<div class="hl" style="left:26px;top:159px;width:1872px;background:#d4d4d4"></div>
<div class="hl" style="left:0px;top:159px;width:25px;background:#e1e1e1"></div>
<div class="rh" style="top:140px">7</div>
<div class="hl" style="left:26px;top:179px;width:1872px;background:#d4d4d4"></div>
<div class="hl" style="left:0px;top:179px;width:25px;background:#e1e1e1"></div>
<div class="rh" style="top:160px">8</div>
<div class="hl" style="left:26px;top:199px;width:1872px;background:#d4d4d4"></div>
<div class="hl" style="left:0px;top:199px;width:25px;background:#e1e1e1"></div>
<div class="rh" style="top:180px">9</div>
<div class="hl" style="left:26px;top:219px;width:1872px;background:#d4d4d4"></div>
<div class="hl" style="left:0px;top:219px;width:25px;background:#e1e1e1"></div>
<div class="rh" style="top:200px">10</div>
<div class="hl" style="left:26px;top:239px;width:1872px;background:#d4d4d4"></div>
<div class="hl" style="left:0px;top:239px;width:25px;background:#e1e1e1"></div>
<div class="rh" style="top:220px">11</div>
<div class="hl" style="left:26px;top:259px;width:1872px;background:#d4d4d4"></div>
<div class="hl" style="left:0px;top:259px;width:25px;background:#e1e1e1"></div>
<div class="rh" style="top:240px">12</div>
<div class="hl" style="left:26px;top:279px;width:1872px;background:#d4d4d4"></div>
<div class="hl" style="left:0px;top:279px;width:25px;background:#e1e1e1"></div>
<div class="rh" style="top:260px">13</div>
<div class="hl" style="left:26px;top:299px;width:1872px;background:#d4d4d4"></div>
<div class="hl" style="left:0px;top:299px;width:25px;background:#e1e1e1"></div>
<div class="rh" style="top:280px">14</div>
<div class="hl" style="left:26px;top:319px;width:1872px;background:#d4d4d4"></div>
<div class="hl" style="left:0px;top:319px;width:25px;background:#e1e1e1"></div>
<div class="rh" style="top:300px">15</div>
<div class="hl" style="left:26px;top:339px;width:1872px;background:#d4d4d4"></div>
<div class="hl" style="left:0px;top:339px;width:25px;background:#e1e1e1"></div>
<div class="rh" style="top:320px">16</div>
<div class="hl" style="left:26px;top:359px;width:1872px;background:#d4d4d4"></div>
<div class="hl" style="left:0px;top:359px;width:25px;background:#e1e1e1"></div>
<div class="rh" style="top:340px">17</div>
<div class="hl" style="left:26px;top:379px;width:1872px;background:#d4d4d4"></div>
<div class="hl" style="left:0px;top:379px;width:25px;background:#e1e1e1"></div>
<div class="rh" style="top:360px">18</div>
<div class="hl" style="left:26px;top:399px;width:1872px;background:#d4d4d4"></div>
<div class="hl" style="left:0px;top:399px;width:25px;background:#e1e1e1"></div>
<div class="rh" style="top:380px">19</div>
<div class="hl" style="left:26px;top:419px;width:1872px;background:#d4d4d4"></div>
<div class="hl" style="left:0px;top:419px;width:25px;background:#e1e1e1"></div>
<div class="rh" style="top:400px">20</div>
<div class="hl" style="left:26px;top:439px;width:1872px;background:#d4d4d4"></div>
<div class="hl" style="left:0px;top:439px;width:25px;background:#e1e1e1"></div>
<div class="rh" style="top:420px">21</div>
<div class="hl" style="left:26px;top:459px;width:1872px;background:#d4d4d4"></div>
<div class="hl" style="left:0px;top:459px;width:25px;background:#e1e1e1"></div>
<div class="rh" style="top:440px">22</div>
<div class="hl" style="left:26px;top:479px;width:1872px;background:#d4d4d4"></div>
<div class="hl" style="left:0px;top:479px;width:25px;background:#e1e1e1"></div>
<div class="rh" style="top:460px">23</div>
<div class="hl" style="left:26px;top:499px;width:1872px;background:#d4d4d4"></div>
<div class="hl" style="left:0px;top:499px;width:25px;background:#e1e1e1"></div>
<div class="rh" style="top:480px">24</div>
<div class="hl" style="left:26px;top:519px;width:1872px;background:#d4d4d4"></div>
<div class="hl" style="left:0px;top:519px;width:25px;background:#e1e1e1"></div>
<div class="rh" style="top:500px">25</div>
<div class="hl" style="left:26px;top:539px;width:1872px;background:#d4d4d4"></div>
<div class="hl" style="left:0px;top:539px;width:25px;background:#e1e1e1"></div>
<div class="rh" style="top:520px">26</div>
<div class="hl" style="left:26px;top:559px;width:1872px;background:#d4d4d4"></div>
<div class="hl" style="left:0px;top:559px;width:25px;background:#e1e1e1"></div>
<div class="rh" style="top:540px">27</div>
<div class="hl" style="left:26px;top:579px;width:1872px;background:#d4d4d4"></div>
<div class="hl" style="left:0px;top:579px;width:25px;background:#e1e1e1"></div>
<div class="rh" style="top:560px">28</div>
<div class="hl" style="left:26px;top:599px;width:1872px;background:#d4d4d4"></div>
<div class="hl" style="left:0px;top:599px;width:25px;background:#e1e1e1"></div>
<div class="rh" style="top:580px">29</div>
<div class="hl" style="left:26px;top:619px;width:1872px;background:#d4d4d4"></div>
<div class="hl" style="left:0px;top:619px;width:25px;background:#e1e1e1"></div>
<div class="rh" style="top:600px">30</div>
<div class="hl" style="left:26px;top:639px;width:1872px;background:#d4d4d4"></div>
<div class="hl" style="left:0px;top:639px;width:25px;background:#e1e1e1"></div>
<div style="position:absolute;left:0;top:619px;width:25px;height:21px;background:#e1e1e1;border-top:1px solid #c6c6c6;border-bottom:1px solid #c6c6c6;box-sizing:border-box"></div>
<div style="position:absolute;left:24px;top:619px;width:2px;height:21px;background:#217346"></div>
<div class="rh" style="top:620px;color:#217346;font-weight:bold">31</div>
<div class="hl" style="left:26px;top:659px;width:1872px;background:#d4d4d4"></div>
<div class="hl" style="left:0px;top:659px;width:25px;background:#e1e1e1"></div>
<div class="rh" style="top:640px">32</div>
<div class="hl" style="left:26px;top:679px;width:1872px;background:#d4d4d4"></div>
<div class="hl" style="left:0px;top:679px;width:25px;background:#e1e1e1"></div>
<div class="rh" style="top:660px">33</div>
<div class="hl" style="left:26px;top:699px;width:1872px;background:#d4d4d4"></div>
<div class="hl" style="left:0px;top:699px;width:25px;background:#e1e1e1"></div>
<div class="rh" style="top:680px">34</div>
<div class="hl" style="left:26px;top:719px;width:1872px;background:#d4d4d4"></div>
<div class="hl" style="left:0px;top:719px;width:25px;background:#e1e1e1"></div>
<div class="rh" style="top:700px">35</div>
<div class="hl" style="left:26px;top:739px;width:1872px;background:#d4d4d4"></div>
<div class="hl" style="left:0px;top:739px;width:25px;background:#e1e1e1"></div>
<div class="rh" style="top:720px">36</div>
<div class="hl" style="left:26px;top:759px;width:1872px;background:#d4d4d4"></div>
<div class="hl" style="left:0px;top:759px;width:25px;background:#e1e1e1"></div>
<div class="rh" style="top:740px">37</div>
<div class="hl" style="left:26px;top:779px;width:1872px;background:#d4d4d4"></div>
<div class="hl" style="left:0px;top:779px;width:25px;background:#e1e1e1"></div>
<div class="rh" style="top:760px">38</div>
<div class="vl" style="left:1898px;top:19px;height:757px;background:#ababab"></div>
<div class="hl" style="left:0px;top:775px;width:1899px;background:#ababab"></div>
<div class="hl" style="left:26px;top:39px;width:1872px;background:#000"></div>
<div class="cell b lc" style="left:26px;top:20px;width:66px;color:#000;font-size:13px"><span class="tl">Last_Contact_Date</span></div>
<div class="vl" style="left:92px;top:20px;height:20px;background:#000"></div>
<div class="cell b lc" style="left:93px;top:20px;width:79px;color:#000;font-size:13px"><span class="tl">Phone_Number_1</span></div>
<div class="vl" style="left:172px;top:20px;height:20px;background:#000"></div>
<div class="cell b lc" style="left:173px;top:20px;width:85px;color:#000;font-size:13px"><span class="tl">Phone_Number_2</span></div>
<div class="vl" style="left:258px;top:20px;height:20px;background:#000"></div>
<div class="cell b lc" style="left:259px;top:20px;width:77px;color:#000;font-size:13px"><span class="tl">Phone_Number_3</span></div>
<div class="vl" style="left:336px;top:20px;height:20px;background:#000"></div>
<div class="cell b lc" style="left:337px;top:20px;width:78px;color:#000;font-size:13px"><span class="tl">Phone_Number_4</span></div>
<div class="vl" style="left:415px;top:20px;height:20px;background:#000"></div>
<div class="cell b lc" style="left:416px;top:20px;width:76px;color:#000;font-size:13px"><span class="tl">Phone_Number_5</span></div>
<div class="vl" style="left:492px;top:20px;height:20px;background:#000"></div>
<div class="cell b lc" style="left:493px;top:20px;width:63px;color:#000;font-size:13px"><span class="tl">Phone_Number_6</span></div>
<div class="vl" style="left:556px;top:20px;height:20px;background:#000"></div>
<div class="cell b lc" style="left:557px;top:20px;width:68px;color:#000;font-size:13px"><span class="tl">Phone_Number_7</span></div>
<div class="vl" style="left:625px;top:20px;height:20px;background:#000"></div>
<div class="cell b lc" style="left:626px;top:20px;width:63px;color:#000;font-size:13px"><span class="tl">Phone_Number_8</span></div>
<div class="vl" style="left:689px;top:20px;height:20px;background:#000"></div>
<div class="cell b lc" style="left:690px;top:20px;width:63px;color:#000;font-size:13px"><span class="tl">Phone_Number_9</span></div>
<div class="vl" style="left:753px;top:20px;height:20px;background:#000"></div>
<div class="cell b lc" style="left:754px;top:20px;width:68px;color:#000;font-size:13px"><span class="tl">Phone_Number_10</span></div>
<div class="vl" style="left:822px;top:20px;height:20px;background:#000"></div>
<div class="cell b lc" style="left:823px;top:20px;width:63px;color:#000;font-size:13px"><span class="tl">Settlement_Amount</span></div>
<div class="vl" style="left:886px;top:20px;height:20px;background:#000"></div>
<div class="cell b lc" style="left:887px;top:20px;width:63px;color:#000;font-size:13px"><span class="tl">Settlement_Date</span></div>
<div class="vl" style="left:950px;top:20px;height:20px;background:#000"></div>
<div class="cell b lc" style="left:951px;top:20px;width:63px;color:#000;font-size:13px"><span class="tl">Contact_Name</span></div>
<div class="vl" style="left:1014px;top:20px;height:20px;background:#000"></div>
<div class="cell b lc" style="left:1015px;top:20px;width:63px;color:#000;font-size:13px"><span class="tl">Installment_1</span></div>
<div class="vl" style="left:1078px;top:20px;height:20px;background:#000"></div>
<div class="cell b lc" style="left:1079px;top:20px;width:63px;color:#000;font-size:13px"><span class="tl">Installment_2</span></div>
<div class="vl" style="left:1142px;top:20px;height:20px;background:#000"></div>
<div class="cell b lc" style="left:1143px;top:20px;width:63px;color:#000;font-size:13px"><span class="tl">Case_Type</span></div>
<div class="vl" style="left:1206px;top:20px;height:20px;background:#000"></div>
<div class="cell b lc" style="left:1207px;top:20px;width:63px;color:#000;font-size:13px"><span class="tl">Case_Stage</span></div>
<div class="vl" style="left:1270px;top:20px;height:20px;background:#000"></div>
<div class="cell b lc" style="left:1271px;top:20px;width:63px;color:#000;font-size:13px"><span class="tl">Case_No</span></div>
<div class="vl" style="left:1334px;top:20px;height:20px;background:#000"></div>
<div class="cell b lc" style="left:1335px;top:20px;width:63px;color:#000;font-size:13px"><span class="tl">Case_Category</span></div>
<div class="vl" style="left:1398px;top:20px;height:20px;background:#000"></div>
<div class="cell b lc" style="left:1399px;top:20px;width:63px;color:#000;font-size:13px"><span class="tl">Case_Category2</span></div>
<div class="vl" style="left:1462px;top:20px;height:20px;background:#000"></div>
<div class="cell b lc" style="left:1463px;top:20px;width:63px;color:#000;font-size:13px"><span class="tl">Profile</span></div>
<div class="vl" style="left:1526px;top:20px;height:20px;background:#000"></div>
<div class="cell b lc" style="left:1527px;top:20px;width:68px;color:#000;font-size:13px"><span class="tl">Employer_Type</span></div>
<div class="vl" style="left:1595px;top:20px;height:20px;background:#000"></div>
<div class="cell b lc" style="left:1596px;top:20px;width:63px;color:#000;font-size:13px"><span class="tl">Address_1</span></div>
<div class="vl" style="left:1659px;top:20px;height:20px;background:#000"></div>
<div class="cell b lc" style="left:1660px;top:20px;width:63px;color:#000;font-size:13px"><span class="tl">Address_2</span></div>
<div class="vl" style="left:1723px;top:20px;height:20px;background:#000"></div>
<div class="cell b lc" style="left:1724px;top:20px;width:63px;color:#000;font-size:13px"><span class="tl">Address_3</span></div>
<div class="vl" style="left:1787px;top:20px;height:20px;background:#000"></div>
<div class="cell b lc" style="left:1788px;top:20px;width:63px;color:#000;font-size:13px"><span class="tl">Address_4</span></div>
<div class="vl" style="left:1851px;top:20px;height:20px;background:#000"></div>
<div class="cell b lc" style="left:1852px;top:20px;width:46px;color:#000;font-size:13px"><span class="tl">Address_5</span></div>
<div class="cell" style="left:26px;top:60px;width:66px;color:#000"><span class="tl">17<span class="sl">/</span>02<span class="sl">/</span>2022</span></div>
<div class="cell r" style="left:93px;top:60px;width:79px;color:#000"><span class="tr">9152148441</span></div>
<div class="cell r" style="left:173px;top:60px;width:85px;color:#000"><span class="tr">11300006433</span></div>
<div class="cell r" style="left:259px;top:60px;width:77px;color:#000"><span class="tr">21212121</span></div>
<div class="cell r" style="left:337px;top:60px;width:78px;color:#000"><span class="tr">222345678</span></div>
<div class="cell r" style="left:416px;top:60px;width:76px;color:#000"><span class="tr">9022608188</span></div>
<div class="cell r" style="left:493px;top:60px;width:63px;color:#000"><span class="tr">9.83E+09</span></div>
<div class="cell r" style="left:557px;top:60px;width:68px;color:#000"><span class="tr">4</span></div>
<div class="cell r" style="left:754px;top:60px;width:68px;color:#000"><span class="tr">1646000</span></div>
<div class="cell lc" style="left:1143px;top:60px;width:63px;color:#000"><span class="tl">Pre Institution</span></div>
<div class="cell lc" style="left:1207px;top:60px;width:63px;color:#000"><span class="tl">Mediation</span></div>
<div class="cell" style="left:1271px;top:60px;width:191px;color:#000"><span class="tl">821<span class="sl">/</span>2021</span></div>
<div class="cell uc" style="left:1463px;top:60px;width:63px;color:#000"><span class="tl">VERY HIGH</span></div>
<div class="cell r" style="left:1527px;top:60px;width:68px;color:#000"><span class="tr">1</span></div>
<div class="cell uc" style="left:1596px;top:60px;width:63px;color:#000"><span class="tl">BUILDING NO</span></div>
<div class="cell uc" style="left:1660px;top:60px;width:63px;color:#000"><span class="tl">BUILDING NO</span></div>
<div class="cell uc" style="left:1724px;top:60px;width:63px;color:#000"><span class="tl">BUILDING NO</span></div>
<div class="cell uc" style="left:1788px;top:60px;width:63px;color:#000"><span class="tl">BUILDING NO</span></div>
<div class="cell uc" style="left:1852px;top:60px;width:46px;color:#000"><span class="tl">BUILDING NO</span></div>
<div class="cell r" style="left:26px;top:80px;width:66px;color:#000"><span class="tr">9<span class="sl">/</span>2<span class="sl">/</span>2022</span></div>
<div class="cell r" style="left:93px;top:80px;width:79px;color:#000"><span class="tr">9082802905</span></div>
<div class="cell r" style="left:557px;top:80px;width:68px;color:#000"><span class="tr">1</span></div>
<div class="cell r" style="left:754px;top:80px;width:68px;color:#000"><span class="tr">666000</span></div>
<div class="cell uc" style="left:1463px;top:80px;width:63px;color:#000"><span class="tl">HIGH</span></div>
<div class="cell r" style="left:1527px;top:80px;width:68px;color:#000"><span class="tr">1</span></div>
<div class="cell uc" style="left:1596px;top:80px;width:63px;color:#000"><span class="tl">323 RAMP</span></div>
<div class="cell uc" style="left:1660px;top:80px;width:238px;color:#000"><span class="tl">28 B 6 SAI AMEYA CHS SEC 12 KHARGHAR</span></div>
<div class="cell r" style="left:26px;top:100px;width:66px;color:#000"><span class="tr">2<span class="sl">/</span>3<span class="sl">/</span>2022</span></div>
<div class="cell r" style="left:93px;top:100px;width:79px;color:#000"><span class="tr">2227546323</span></div>
<div class="cell r" style="left:173px;top:100px;width:85px;color:#000"><span class="tr">21212121</span></div>
<div class="cell r" style="left:259px;top:100px;width:77px;color:#000"><span class="tr">9821543314</span></div>
<div class="cell r" style="left:557px;top:100px;width:68px;color:#000"><span class="tr">1</span></div>
<div class="cell r" style="left:754px;top:100px;width:68px;color:#000"><span class="tr">1278000</span></div>
<div class="cell uc" style="left:1143px;top:100px;width:63px;color:#000"><span class="tl">CASE138#CASE</span></div>
<div class="cell lc" style="left:1207px;top:100px;width:63px;color:#000"><span class="tl">Verification</span></div>
<div class="cell uc" style="left:1271px;top:100px;width:191px;color:#000"><span class="tl">798<span class="sl">/</span>MISC<span class="sl">/</span>2021#1062<span class="sl">/</span>2021</span></div>
<div class="cell uc" style="left:1463px;top:100px;width:63px;color:#000"><span class="tl">VERY HIGH</span></div>
<div class="cell r" style="left:1527px;top:100px;width:68px;color:#000"><span class="tr">1</span></div>
<div class="cell uc" style="left:1596px;top:100px;width:63px;color:#000"><span class="tl">M3 MANGAL</span></div>
<div class="cell uc" style="left:1660px;top:100px;width:63px;color:#000"><span class="tl">M3 MANGAL</span></div>
<div class="cell uc" style="left:1724px;top:100px;width:63px;color:#000"><span class="tl">M3 MANGAL</span></div>
<div class="cell uc" style="left:1788px;top:100px;width:63px;color:#000"><span class="tl">M3 MANGAL</span></div>
<div class="cell uc" style="left:1852px;top:100px;width:46px;color:#000"><span class="tl">M3 MA</span></div>
<div class="cell" style="left:26px;top:120px;width:66px;color:#000"><span class="tl">14<span class="sl">/</span>02<span class="sl">/</span>2022</span></div>
<div class="cell r" style="left:93px;top:120px;width:79px;color:#000"><span class="tr">21212121</span></div>
<div class="cell r" style="left:173px;top:120px;width:85px;color:#000"><span class="tr">8692978785</span></div>
<div class="cell r" style="left:557px;top:120px;width:68px;color:#000"><span class="tr">1</span></div>
<div class="cell r" style="left:754px;top:120px;width:68px;color:#000"><span class="tr">500000</span></div>
<div class="cell uc" style="left:1143px;top:120px;width:63px;color:#000"><span class="tl">CASE138</span></div>
<div class="cell lc" style="left:1207px;top:120px;width:63px;color:#000"><span class="tl">Complaint</span></div>
<div class="cell lc" style="left:1271px;top:120px;width:191px;color:#000"><span class="tl">1251<span class="sl">/</span>Misc<span class="sl">/</span>2021</span></div>
<div class="cell uc" style="left:1463px;top:120px;width:63px;color:#000"><span class="tl">VERY HIGH</span></div>
<div class="cell r" style="left:1527px;top:120px;width:68px;color:#000"><span class="tr">6</span></div>
<div class="cell uc" style="left:1596px;top:120px;width:63px;color:#000"><span class="tl">59 THORIYA</span></div>
<div class="cell uc" style="left:1660px;top:120px;width:63px;color:#000"><span class="tl">59 THORIYA</span></div>
<div class="cell uc" style="left:1724px;top:120px;width:63px;color:#000"><span class="tl">59 THORIYA</span></div>
<div class="cell uc" style="left:1788px;top:120px;width:110px;color:#000"><span class="tl">59 THORIYA BHAGAT</span></div>
<div class="cell r" style="left:26px;top:140px;width:66px;color:#000"><span class="tr">9<span class="sl">/</span>2<span class="sl">/</span>2022</span></div>
<div class="cell r" style="left:93px;top:140px;width:79px;color:#000"><span class="tr">9967661106</span></div>
<div class="cell r" style="left:173px;top:140px;width:85px;color:#000"><span class="tr">21212121</span></div>
<div class="cell r" style="left:259px;top:140px;width:77px;color:#000"><span class="tr">222345678</span></div>
<div class="cell r" style="left:337px;top:140px;width:78px;color:#000"><span class="tr">3.8742E+10</span></div>
<div class="cell r" style="left:416px;top:140px;width:76px;color:#000"><span class="tr">9967661106</span></div>
<div class="cell r" style="left:557px;top:140px;width:68px;color:#000"><span class="tr">1</span></div>
<div class="cell r" style="left:754px;top:140px;width:68px;color:#000"><span class="tr">684000</span></div>
<div class="cell lc" style="left:1143px;top:140px;width:63px;color:#000"><span class="tl">Civil Suit</span></div>
<div class="cell lc" style="left:1207px;top:140px;width:63px;color:#000"><span class="tl">Suit Filed</span></div>
<div class="cell lc" style="left:1271px;top:140px;width:191px;color:#000"><span class="tl">Mediation<span class="sl">/</span>778<span class="sl">/</span>2021</span></div>
<div class="cell uc" style="left:1463px;top:140px;width:63px;color:#000"><span class="tl">VERY HIGH</span></div>
<div class="cell r" style="left:1527px;top:140px;width:68px;color:#000"><span class="tr">1</span></div>
<div class="cell uc" style="left:1596px;top:140px;width:63px;color:#000"><span class="tl">KHARGHAR</span></div>
<div class="cell uc" style="left:1660px;top:140px;width:63px;color:#000"><span class="tl">KHARGHAR</span></div>
<div class="cell uc" style="left:1724px;top:140px;width:63px;color:#000"><span class="tl">KHARGHAR</span></div>
<div class="cell uc" style="left:1788px;top:140px;width:63px;color:#000"><span class="tl">KHARGHAR</span></div>
<div class="cell uc" style="left:1852px;top:140px;width:46px;color:#000"><span class="tl">KHARG</span></div>
<div class="cell b r" style="left:26px;top:160px;width:66px;color:#0000cc"><span class="tr">7<span class="sl">/</span>1<span class="sl">/</span>2022</span></div>
<div class="cell b r" style="left:93px;top:160px;width:79px;color:#0000cc"><span class="tr">7138762448</span></div>
<div class="cell b r" style="left:173px;top:160px;width:85px;color:#0000cc"><span class="tr">7738762448</span></div>
<div class="cell b r" style="left:557px;top:160px;width:68px;color:#0000cc"><span class="tr">2</span></div>
<div class="cell b r" style="left:754px;top:160px;width:68px;color:#0000cc"><span class="tr">521000</span></div>
<div class="cell b uc" style="left:1463px;top:160px;width:63px;color:#0000cc"><span class="tl">VERY HIGH</span></div>
<div class="cell b r" style="left:1527px;top:160px;width:68px;color:#0000cc"><span class="tr">1</span></div>
<div class="cell b uc" style="left:1596px;top:160px;width:63px;color:#0000cc"><span class="tl">D<span class="sl">/</span>43<span class="sl">/</span>44<span class="sl">/</span>53</span></div>
<div class="cell b uc" style="left:1660px;top:160px;width:63px;color:#0000cc"><span class="tl">D<span class="sl">/</span>43<span class="sl">/</span>44<span class="sl">/</span>53</span></div>
<div class="cell b uc" style="left:1724px;top:160px;width:63px;color:#0000cc"><span class="tl">D<span class="sl">/</span>43<span class="sl">/</span>44<span class="sl">/</span>53</span></div>
<div class="cell b uc" style="left:1788px;top:160px;width:110px;color:#0000cc"><span class="tl">D<span class="sl">/</span>43<span class="sl">/</span>44<span class="sl">/</span>53, MEK</span></div>
<div class="cell" style="left:26px;top:180px;width:66px;color:#000"><span class="tl">17<span class="sl">/</span>02<span class="sl">/</span>2022</span></div>
<div class="cell r" style="left:93px;top:180px;width:79px;color:#000"><span class="tr">9152148441</span></div>
<div class="cell r" style="left:173px;top:180px;width:85px;color:#000"><span class="tr">11300006433</span></div>
<div class="cell r" style="left:259px;top:180px;width:77px;color:#000"><span class="tr">21212121</span></div>
<div class="cell r" style="left:337px;top:180px;width:78px;color:#000"><span class="tr">222345678</span></div>
<div class="cell r" style="left:416px;top:180px;width:76px;color:#000"><span class="tr">9022608188</span></div>
<div class="cell r" style="left:493px;top:180px;width:63px;color:#000"><span class="tr">9.83E+09</span></div>
<div class="cell r" style="left:557px;top:180px;width:68px;color:#000"><span class="tr">4</span></div>
<div class="cell r" style="left:754px;top:180px;width:68px;color:#000"><span class="tr">464000</span></div>
<div class="cell uc" style="left:1463px;top:180px;width:63px;color:#000"><span class="tl">VERY HIGH</span></div>
<div class="cell r" style="left:1527px;top:180px;width:68px;color:#000"><span class="tr">1</span></div>
<div class="cell uc" style="left:1596px;top:180px;width:63px;color:#000"><span class="tl">BUILDING NO</span></div>
<div class="cell uc" style="left:1660px;top:180px;width:63px;color:#000"><span class="tl">BUILDING NO</span></div>
<div class="cell uc" style="left:1724px;top:180px;width:63px;color:#000"><span class="tl">BUILDING NO</span></div>
<div class="cell uc" style="left:1788px;top:180px;width:63px;color:#000"><span class="tl">BUILDING NO</span></div>
<div class="cell uc" style="left:1852px;top:180px;width:46px;color:#000"><span class="tl">BUILDING NO</span></div>
<div class="cell b" style="left:26px;top:200px;width:66px;color:#ff00ff"><span class="tl">14<span class="sl">/</span>02<span class="sl">/</span>2022</span></div>
<div class="cell b r" style="left:93px;top:200px;width:79px;color:#ff00ff"><span class="tr">222345678</span></div>
<div class="cell b r" style="left:173px;top:200px;width:85px;color:#ff00ff"><span class="tr">2225642813</span></div>
<div class="cell b r" style="left:259px;top:200px;width:77px;color:#ff00ff"><span class="tr">21212121</span></div>
<div class="cell b r" style="left:337px;top:200px;width:78px;color:#ff00ff"><span class="tr">8652643645</span></div>
<div class="cell b r" style="left:557px;top:200px;width:68px;color:#ff00ff"><span class="tr">1</span></div>
<div class="cell b r" style="left:754px;top:200px;width:68px;color:#ff00ff"><span class="tr">492000</span></div>
<div class="cell b uc" style="left:1463px;top:200px;width:63px;color:#ff00ff"><span class="tl">VERY HIGH</span></div>
<div class="cell b r" style="left:1527px;top:200px;width:68px;color:#ff00ff"><span class="tr">1</span></div>
<div class="cell b uc" style="left:1596px;top:200px;width:63px;color:#ff00ff"><span class="tl">03 GR PLOT</span></div>
<div class="cell b uc" style="left:1660px;top:200px;width:63px;color:#ff00ff"><span class="tl">03 GR PLOT</span></div>
<div class="cell b uc" style="left:1724px;top:200px;width:63px;color:#ff00ff"><span class="tl">03 GR PLOT</span></div>
<div class="cell b uc" style="left:1788px;top:200px;width:110px;color:#ff00ff"><span class="tl">03 GR PLOT 02 SECTOR</span></div>
<div class="cell b r" style="left:26px;top:220px;width:66px;color:#0000cc"><span class="tr">5<span class="sl">/</span>3<span class="sl">/</span>2022</span></div>
<div class="cell b r" style="left:93px;top:220px;width:79px;color:#0000cc"><span class="tr">2267474507</span></div>
<div class="cell b r" style="left:173px;top:220px;width:85px;color:#0000cc"><span class="tr">67474307</span></div>
<div class="cell b r" style="left:259px;top:220px;width:77px;color:#0000cc"><span class="tr">67474507</span></div>
<div class="cell b r" style="left:337px;top:220px;width:78px;color:#0000cc"><span class="tr">9987000526</span></div>
<div class="cell b r" style="left:557px;top:220px;width:68px;color:#0000cc"><span class="tr">1</span></div>
<div class="cell b r" style="left:754px;top:220px;width:68px;color:#0000cc"><span class="tr">616000</span></div>
<div class="cell b lc" style="left:1143px;top:220px;width:63px;color:#0000cc"><span class="tl">Pre Institution</span></div>
<div class="cell b lc" style="left:1207px;top:220px;width:63px;color:#0000cc"><span class="tl">Mediation</span></div>
<div class="cell b" style="left:1271px;top:220px;width:191px;color:#0000cc"><span class="tl">94<span class="sl">/</span>2022</span></div>
<div class="cell b uc" style="left:1463px;top:220px;width:63px;color:#0000cc"><span class="tl">VERY HIGH</span></div>
<div class="cell b r" style="left:1527px;top:220px;width:68px;color:#0000cc"><span class="tr">1</span></div>
<div class="cell b uc" style="left:1596px;top:220px;width:63px;color:#0000cc"><span class="tl">101 FLR 1ST</span></div>
<div class="cell b uc" style="left:1660px;top:220px;width:63px;color:#0000cc"><span class="tl">101 FLR 1ST</span></div>
<div class="cell b uc" style="left:1724px;top:220px;width:63px;color:#0000cc"><span class="tl">101 FLR 1ST</span></div>
<div class="cell b uc" style="left:1788px;top:220px;width:63px;color:#0000cc"><span class="tl">101 FLR 1ST</span></div>
<div class="cell b uc" style="left:1852px;top:220px;width:46px;color:#0000cc"><span class="tl">101 FLR 1ST</span></div>
<div class="cell r" style="left:26px;top:240px;width:66px;color:#000"><span class="tr">9<span class="sl">/</span>2<span class="sl">/</span>2022</span></div>
<div class="cell r" style="left:93px;top:240px;width:79px;color:#000"><span class="tr">2852345678</span></div>
<div class="cell r" style="left:173px;top:240px;width:85px;color:#000"><span class="tr">21212121</span></div>
<div class="cell r" style="left:259px;top:240px;width:77px;color:#000"><span class="tr">7039423730</span></div>
<div class="cell r" style="left:337px;top:240px;width:78px;color:#000"><span class="tr">7043595929</span></div>
<div class="cell r" style="left:557px;top:240px;width:68px;color:#000"><span class="tr">3</span></div>
<div class="cell r" style="left:754px;top:240px;width:68px;color:#000"><span class="tr">358000</span></div>
<div class="cell lc" style="left:1143px;top:240px;width:63px;color:#000"><span class="tl">Civil Suit</span></div>
<div class="cell lc" style="left:1207px;top:240px;width:63px;color:#000"><span class="tl">Suit Filed</span></div>
<div class="cell" style="left:1271px;top:240px;width:191px;color:#000"><span class="tl">842<span class="sl">/</span>2021</span></div>
<div class="cell uc" style="left:1463px;top:240px;width:63px;color:#000"><span class="tl">VERY HIGH</span></div>
<div class="cell r" style="left:1527px;top:240px;width:68px;color:#000"><span class="tr">1</span></div>
<div class="cell uc" style="left:1596px;top:240px;width:63px;color:#000"><span class="tl">136105 B SECTOR</span></div>
<div class="cell uc" style="left:1660px;top:240px;width:63px;color:#000"><span class="tl">136105 B SECTOR</span></div>
<div class="cell uc" style="left:1724px;top:240px;width:63px;color:#000"><span class="tl">136105 B SECTOR</span></div>
<div class="cell uc" style="left:1788px;top:240px;width:63px;color:#000"><span class="tl">136105 B SECTOR</span></div>
<div class="cell" style="left:1852px;top:240px;width:46px;color:#000"><span class="tl">136105 </span></div>
<div class="cell r" style="left:26px;top:260px;width:66px;color:#000"><span class="tr">9<span class="sl">/</span>2<span class="sl">/</span>2022</span></div>
<div class="cell r" style="left:93px;top:260px;width:79px;color:#000"><span class="tr">7738406706</span></div>
<div class="cell r" style="left:173px;top:260px;width:85px;color:#000"><span class="tr">21212121</span></div>
<div class="cell r" style="left:259px;top:260px;width:77px;color:#000"><span class="tr">7738406706</span></div>
<div class="cell r" style="left:337px;top:260px;width:78px;color:#000"><span class="tr">9136644042</span></div>
<div class="cell r" style="left:557px;top:260px;width:68px;color:#000"><span class="tr">1</span></div>
<div class="cell r" style="left:754px;top:260px;width:68px;color:#000"><span class="tr">450000</span></div>
<div class="cell uc" style="left:1463px;top:260px;width:63px;color:#000"><span class="tl">VERY HIGH</span></div>
<div class="cell r" style="left:1527px;top:260px;width:68px;color:#000"><span class="tr">6</span></div>
<div class="cell uc" style="left:1596px;top:260px;width:63px;color:#000"><span class="tl">ADITYA NATH</span></div>
<div class="cell uc" style="left:1660px;top:260px;width:63px;color:#000"><span class="tl">ADITYA NATH</span></div>
<div class="cell uc" style="left:1724px;top:260px;width:63px;color:#000"><span class="tl">ADITYA NATH</span></div>
<div class="cell uc" style="left:1788px;top:260px;width:110px;color:#000"><span class="tl">ADITYA NATH APARTMENT</span></div>
<div class="cell r" style="left:26px;top:280px;width:66px;color:#000"><span class="tr">9<span class="sl">/</span>2<span class="sl">/</span>2022</span></div>
<div class="cell r" style="left:93px;top:280px;width:79px;color:#000"><span class="tr">21212121</span></div>
<div class="cell r" style="left:173px;top:280px;width:85px;color:#000"><span class="tr">9284823710</span></div>
<div class="cell r" style="left:259px;top:280px;width:77px;color:#000"><span class="tr">9767562529</span></div>
<div class="cell r" style="left:557px;top:280px;width:68px;color:#000"><span class="tr">1</span></div>
<div class="cell r" style="left:754px;top:280px;width:68px;color:#000"><span class="tr">486500</span></div>
<div class="cell uc" style="left:1463px;top:280px;width:63px;color:#000"><span class="tl">VERY LOW</span></div>
<div class="cell r" style="left:1527px;top:280px;width:68px;color:#000"><span class="tr">1</span></div>
<div class="cell uc" style="left:1596px;top:280px;width:63px;color:#000"><span class="tl">PANVEL P.O</span></div>
<div class="cell uc" style="left:1660px;top:280px;width:238px;color:#000"><span class="tl">3 RAIGARH</span></div>
<div class="cell r" style="left:26px;top:300px;width:66px;color:#000"><span class="tr">9<span class="sl">/</span>2<span class="sl">/</span>2022</span></div>
<div class="cell r" style="left:93px;top:300px;width:79px;color:#000"><span class="tr">225661</span></div>
<div class="cell r" style="left:173px;top:300px;width:85px;color:#000"><span class="tr">9172832279</span></div>
<div class="cell r" style="left:259px;top:300px;width:77px;color:#000"><span class="tr">9423382121</span></div>
<div class="cell r" style="left:557px;top:300px;width:68px;color:#000"><span class="tr">1</span></div>
<div class="cell r" style="left:754px;top:300px;width:68px;color:#000"><span class="tr">381500</span></div>
<div class="cell uc" style="left:1463px;top:300px;width:63px;color:#000"><span class="tl">LOW</span></div>
<div class="cell r" style="left:1527px;top:300px;width:68px;color:#000"><span class="tr">1</span></div>
<div class="cell uc" style="left:1596px;top:300px;width:63px;color:#000"><span class="tl">AT POST MADHALI</span></div>
<div class="cell uc" style="left:1660px;top:300px;width:63px;color:#000"><span class="tl">AT POST MADHALI</span></div>
<div class="cell uc" style="left:1724px;top:300px;width:63px;color:#000"><span class="tl">AT POST MADHALI</span></div>
<div class="cell uc" style="left:1788px;top:300px;width:110px;color:#000"><span class="tl">AT POST MADHALI</span></div>
<div class="cell" style="left:26px;top:320px;width:66px;color:#000"><span class="tl">17<span class="sl">/</span>02<span class="sl">/</span>2022</span></div>
<div class="cell r" style="left:93px;top:320px;width:79px;color:#000"><span class="tr">8108793396</span></div>
<div class="cell r" style="left:173px;top:320px;width:85px;color:#000"><span class="tr">9.18109E+11</span></div>
<div class="cell r" style="left:259px;top:320px;width:77px;color:#000"><span class="tr">9820400819</span></div>
<div class="cell r" style="left:557px;top:320px;width:68px;color:#000"><span class="tr">1</span></div>
<div class="cell r" style="left:754px;top:320px;width:68px;color:#000"><span class="tr">433000</span></div>
<div class="cell lc" style="left:1143px;top:320px;width:63px;color:#000"><span class="tl">Civil Suit</span></div>
<div class="cell lc" style="left:1207px;top:320px;width:63px;color:#000"><span class="tl">Suit Filed</span></div>
<div class="cell" style="left:1271px;top:320px;width:255px;color:#000"><span class="tl">206<span class="sl">/</span>2021</span></div>
<div class="cell r" style="left:1527px;top:320px;width:68px;color:#000"><span class="tr">1</span></div>
<div class="cell uc" style="left:1596px;top:320px;width:63px;color:#000"><span class="tl">FLAT NO 3</span></div>
<div class="cell uc" style="left:1660px;top:320px;width:63px;color:#000"><span class="tl">003 SHREE</span></div>
<div class="cell uc" style="left:1724px;top:320px;width:63px;color:#000"><span class="tl">SADGUTU</span></div>
<div class="cell uc" style="left:1788px;top:320px;width:110px;color:#000"><span class="tl">KRUPA BUILDING NEAR</span></div>
<div class="cell r" style="left:26px;top:340px;width:66px;color:#000"><span class="tr">4<span class="sl">/</span>3<span class="sl">/</span>2022</span></div>
<div class="cell r" style="left:93px;top:340px;width:79px;color:#000"><span class="tr">21212121</span></div>
<div class="cell r" style="left:173px;top:340px;width:85px;color:#000"><span class="tr">49768646</span></div>
<div class="cell r" style="left:259px;top:340px;width:77px;color:#000"><span class="tr">8425006907</span></div>
<div class="cell r" style="left:557px;top:340px;width:68px;color:#000"><span class="tr">3</span></div>
<div class="cell r" style="left:754px;top:340px;width:68px;color:#000"><span class="tr">464000</span></div>
<div class="cell lc" style="left:1143px;top:340px;width:63px;color:#000"><span class="tl">Pre Institution</span></div>
<div class="cell lc" style="left:1207px;top:340px;width:63px;color:#000"><span class="tl">Mediation</span></div>
<div class="cell" style="left:1271px;top:340px;width:191px;color:#000"><span class="tl">856<span class="sl">/</span>2021</span></div>
<div class="cell uc" style="left:1463px;top:340px;width:63px;color:#000"><span class="tl">VERY HIGH</span></div>
<div class="cell r" style="left:1527px;top:340px;width:68px;color:#000"><span class="tr">1</span></div>
<div class="cell uc" style="left:1596px;top:340px;width:63px;color:#000"><span class="tl">4,BHUSHAN</span></div>
<div class="cell uc" style="left:1660px;top:340px;width:63px;color:#000"><span class="tl">4,BHUSHAN</span></div>
<div class="cell uc" style="left:1724px;top:340px;width:63px;color:#000"><span class="tl">4,BHUSHAN</span></div>
<div class="cell uc" style="left:1788px;top:340px;width:63px;color:#000"><span class="tl">4,BHUSHAN</span></div>
<div class="cell uc" style="left:1852px;top:340px;width:46px;color:#000"><span class="tl">4,BHUSHAN</span></div>
<div class="cell r" style="left:26px;top:400px;width:66px;color:#000"><span class="tr">2<span class="sl">/</span>3<span class="sl">/</span>2022</span></div>
<div class="cell r" style="left:93px;top:400px;width:79px;color:#000"><span class="tr">21212121</span></div>
<div class="cell r" style="left:173px;top:400px;width:85px;color:#000"><span class="tr">7740424</span></div>
<div class="cell r" style="left:259px;top:400px;width:77px;color:#000"><span class="tr">8655527410</span></div>
<div class="cell r" style="left:337px;top:400px;width:78px;color:#000"><span class="tr">8655527413</span></div>
<div class="cell r" style="left:557px;top:400px;width:68px;color:#000"><span class="tr">1</span></div>
<div class="cell r" style="left:754px;top:400px;width:68px;color:#000"><span class="tr">963000</span></div>
<div class="cell uc" style="left:1463px;top:400px;width:63px;color:#000"><span class="tl">VERY LOW</span></div>
<div class="cell r" style="left:1527px;top:400px;width:68px;color:#000"><span class="tr">1</span></div>
<div class="cell uc" style="left:1596px;top:400px;width:63px;color:#000"><span class="tl">FLAT NO 1</span></div>
<div class="cell uc" style="left:1660px;top:400px;width:238px;color:#000"><span class="tl">MUMBAI</span></div>
<div class="cell b r" style="left:26px;top:420px;width:66px;color:#ff00ff"><span class="tr">9<span class="sl">/</span>2<span class="sl">/</span>2022</span></div>
<div class="cell b r" style="left:93px;top:420px;width:79px;color:#ff00ff"><span class="tr">21212121</span></div>
<div class="cell b r" style="left:173px;top:420px;width:85px;color:#ff00ff"><span class="tr">222345678</span></div>
<div class="cell b r" style="left:259px;top:420px;width:77px;color:#ff00ff"><span class="tr">7021421043</span></div>
<div class="cell b r" style="left:337px;top:420px;width:78px;color:#ff00ff"><span class="tr">7021596883</span></div>
<div class="cell b r" style="left:416px;top:420px;width:76px;color:#ff00ff"><span class="tr">7303847733</span></div>
<div class="cell b r" style="left:557px;top:420px;width:68px;color:#ff00ff"><span class="tr">1</span></div>
<div class="cell b r" style="left:754px;top:420px;width:68px;color:#ff00ff"><span class="tr">455900</span></div>
<div class="cell b r" style="left:1527px;top:420px;width:68px;color:#ff00ff"><span class="tr">1</span></div>
<div class="cell b uc" style="left:1596px;top:420px;width:63px;color:#ff00ff"><span class="tl">DEFINITION</span></div>
<div class="cell b uc" style="left:1660px;top:420px;width:63px;color:#ff00ff"><span class="tl">DEFINITION</span></div>
<div class="cell b uc" style="left:1724px;top:420px;width:63px;color:#ff00ff"><span class="tl">DEFINITION</span></div>
<div class="cell b uc" style="left:1788px;top:420px;width:63px;color:#ff00ff"><span class="tl">DEFINITION</span></div>
<div class="cell b uc" style="left:1852px;top:420px;width:46px;color:#ff00ff"><span class="tl">DEFINITION</span></div>
<div class="cell r" style="left:26px;top:460px;width:66px;color:#000"><span class="tr">5<span class="sl">/</span>3<span class="sl">/</span>2022</span></div>
<div class="cell r" style="left:93px;top:460px;width:79px;color:#000"><span class="tr">21212121</span></div>
<div class="cell r" style="left:173px;top:460px;width:85px;color:#000"><span class="tr">2.59577E+15</span></div>
<div class="cell r" style="left:259px;top:460px;width:77px;color:#000"><span class="tr">9834722726</span></div>
<div class="cell r" style="left:557px;top:460px;width:68px;color:#000"><span class="tr">2</span></div>
<div class="cell r" style="left:754px;top:460px;width:68px;color:#000"><span class="tr">222000</span></div>
<div class="cell uc" style="left:1463px;top:460px;width:63px;color:#000"><span class="tl">VERY HIGH</span></div>
<div class="cell r" style="left:1527px;top:460px;width:68px;color:#000"><span class="tr">100519</span></div>
<div class="cell uc" style="left:1596px;top:460px;width:63px;color:#000"><span class="tl">1276 A 118</span></div>
<div class="cell uc" style="left:1660px;top:460px;width:63px;color:#000"><span class="tl">1276 A 118</span></div>
<div class="cell uc" style="left:1724px;top:460px;width:63px;color:#000"><span class="tl">1276 A 118</span></div>
<div class="cell uc" style="left:1788px;top:460px;width:110px;color:#000"><span class="tl">1276 A 118 GURUDEV</span></div>
<div class="cell r" style="left:26px;top:480px;width:66px;color:#000"><span class="tr">5<span class="sl">/</span>3<span class="sl">/</span>2022</span></div>
<div class="cell r" style="left:93px;top:480px;width:79px;color:#000"><span class="tr">9167467999</span></div>
<div class="cell r" style="left:173px;top:480px;width:85px;color:#000"><span class="tr">21212121</span></div>
<div class="cell r" style="left:259px;top:480px;width:77px;color:#000"><span class="tr">8689932473</span></div>
<div class="cell r" style="left:337px;top:480px;width:78px;color:#000"><span class="tr">9167467999</span></div>
<div class="cell r" style="left:557px;top:480px;width:68px;color:#000"><span class="tr">1</span></div>
<div class="cell r" style="left:754px;top:480px;width:68px;color:#000"><span class="tr">900000</span></div>
<div class="cell uc" style="left:1463px;top:480px;width:63px;color:#000"><span class="tl">VERY HIGH</span></div>
<div class="cell r" style="left:1527px;top:480px;width:68px;color:#000"><span class="tr">1</span></div>
<div class="cell uc" style="left:1596px;top:480px;width:63px;color:#000"><span class="tl">SHIV DARSHAN</span></div>
<div class="cell uc" style="left:1660px;top:480px;width:63px;color:#000"><span class="tl">SHIV DARSHAN</span></div>
<div class="cell uc" style="left:1724px;top:480px;width:63px;color:#000"><span class="tl">SHIV DARSHAN</span></div>
<div class="cell uc" style="left:1788px;top:480px;width:110px;color:#000"><span class="tl">SHIV DARSHAN RESIDENCY</span></div>
</div>
<div class="a" style="left:1899px;top:206px;width:21px;height:812px;background:#fff"></div>
<div class="a" style="left:1902px;top:217px;width:14px;height:773px;background:#f0f0f0"></div>
<div class="a" style="left:1902px;top:217px;width:13px;height:13px;border:1px solid #c6c6c6;background:#fff"></div>
<div class="dd" style="left:1905px;top:222px;border-left-width:4px;border-right-width:4px;border-top:none;border-bottom:4px solid #777"></div>
<div class="a" style="left:1902px;top:232px;width:13px;height:721px;border:1px solid #ababab;background:#fff"></div>
<div class="a" style="left:1902px;top:976px;width:13px;height:13px;border:1px solid #c6c6c6;background:#fff"></div>
<div class="dd" style="left:1905px;top:982px;border-left-width:4px;border-right-width:4px;border-top:4px solid #777"></div>
<div class="a" style="left:0;top:991px;width:1920px;height:27px;background:#f3f3f3"></div>
<svg class="a" style="left:26px;top:998px" width="8" height="10"><path d="M6 1L1 5L6 9Z" fill="#bbb"/></svg>
<svg class="a" style="left:55px;top:998px" width="8" height="10"><path d="M2 1L7 5L2 9Z" fill="#bbb"/></svg>
<div class="a" style="left:100px;top:990px;width:65px;height:25px;background:#fff;border-left:1px solid #ababab;border-right:1px solid #ababab"></div>
<div class="a" style="left:100px;top:1013px;width:67px;height:2px;background:#217346"></div>
<div class="a" style="left:112px;top:995px;font-size:13.5px;line-height:16px;color:#217346;font-weight:bold;letter-spacing:-0.4px">Sheet1</div>
<div class="a" style="left:178px;top:995px;font-size:13.5px;line-height:16px;color:#444;letter-spacing:-0.5px">Sheet2</div>
<div class="a" style="left:229px;top:994px;width:1px;height:20px;background:#c6c6c6"></div>
<svg class="a" style="left:262px;top:995px" width="17" height="17"><circle cx="8.5" cy="8.5" r="7.5" fill="none" stroke="#777"/><path d="M8.5 4.5V12.5M4.5 8.5H12.5" stroke="#666" stroke-width="1.6"/></svg>
<div class="a" style="left:1152px;top:998px;width:2px;height:2px;background:#999"></div><div class="a" style="left:1152px;top:1003px;width:2px;height:2px;background:#999"></div><div class="a" style="left:1152px;top:1008px;width:2px;height:2px;background:#999"></div>
<div class="a" style="left:1169px;top:997px;width:729px;height:14px;background:#e8e8e8"></div>
<div class="a" style="left:1169px;top:997px;width:14px;height:12px;border:1px solid #ababab;background:#fff"></div>
<svg class="a" style="left:1172px;top:999px" width="8" height="10"><path d="M6 1L2 5L6 9Z" fill="#666"/></svg>
<div class="a" style="left:1712px;top:997px;width:132px;height:12px;border:1px solid #ababab;background:#fff"></div>
<div class="a" style="left:1884px;top:997px;width:13px;height:12px;border:1px solid #ababab;background:#fff"></div>
<svg class="a" style="left:1887px;top:999px" width="8" height="10"><path d="M2 1L6 5L2 9Z" fill="#666"/></svg>
<div class="a" style="left:1599px;top:948px;font-size:19.5px;line-height:22px;color:rgba(110,110,110,0.45);">Activate Windows</div>
<div class="a" style="left:1599px;top:972px;font-size:15px;line-height:17px;color:rgba(110,110,110,0.45);">Go to Settings to activate Windows.</div>
<div class="a" style="left:0;top:1018px;width:1920px;height:22px;background:#217346"></div>
<div class="a" style="left:7px;top:1023px;font-size:11px;line-height:13px;color:#fff;letter-spacing:-0.7px">READY</div>
<div class="a" style="left:1628px;top:1018px;width:38px;height:22px;background:#0e5a2e"></div>
<svg class="a" style="left:1639px;top:1022px" width="14" height="14"><g fill="none" stroke="#fff"><rect x="0.5" y="0.5" width="12" height="12"/><path d="M0.5 4.5H12.5M0.5 8.5H12.5M4.5 0.5V12.5M8.5 0.5V12.5"/></g></svg>
<svg class="a" style="left:1678px;top:1022px" width="15" height="14"><g fill="none" stroke="#fff"><rect x="0.5" y="0.5" width="13" height="12"/><rect x="3.5" y="2.5" width="7" height="8"/><path d="M5 5H9M5 7H9"/></g></svg>
<svg class="a" style="left:1716px;top:1021px" width="15" height="15"><g fill="none" stroke="#fff"><rect x="0.5" y="0.5" width="13" height="13"/></g><rect x="2" y="2" width="3" height="6" fill="#fff"/><rect x="7" y="2" width="5" height="4" fill="#fff"/></svg>
<div class="a" style="left:1746px;top:1028px;width:7px;height:2px;background:#fff"></div>
<div class="a" style="left:1756px;top:1029px;width:100px;height:1px;background:#fff"></div>
<div class="a" style="left:1805px;top:1023px;width:4px;height:12px;background:#fff"></div>
<div class="a" style="left:1861px;top:1028px;width:9px;height:2px;background:#fff"></div><div class="a" style="left:1864.5px;top:1024.5px;width:2px;height:9px;background:#fff"></div>
<div class="a" style="left:1883px;top:1023px;font-size:11px;line-height:13px;color:#fff;letter-spacing:-0.3px">100%</div>
<div class="a" style="left:0;top:1040px;width:1920px;height:40px;background:linear-gradient(90deg,#1f3340 0%,#223644 40%,#1f3143 62%,#1d2a47 80%,#1c2845 100%)"></div>
<svg class="a" style="left:16px;top:1052px" width="17" height="17"><path d="M0 2.3L7 1.3V8H0ZM8 1.2L16 0V8H8ZM0 9H7V15.7L0 14.7ZM8 9H16V17L8 15.8Z" fill="#fff"/></svg>
<div class="a" style="left:48px;top:1040px;width:344px;height:40px;background:#f0f0f0"></div>
<svg class="a" style="left:59px;top:1052px" width="18" height="18"><circle cx="11" cy="6.5" r="5" fill="none" stroke="#222" stroke-width="1.3"/><path d="M7.5 10L1 16.5" stroke="#222" stroke-width="1.4"/></svg>
<div class="a" style="left:88px;top:1054px;font-size:14.8px;line-height:17px;color:#222;">Type here to search</div>
<svg class="a" style="left:406px;top:1051px" width="19" height="19"><circle cx="9.5" cy="9.5" r="7.5" fill="none" stroke="#fff" stroke-width="2"/></svg>
<svg class="a" style="left:454px;top:1050px" width="20" height="20"><path d="M1.5 3H15M1.5 17H15" stroke="#fff" stroke-width="1.4"/><rect x="3" y="6" width="11" height="8" fill="none" stroke="#fff" stroke-width="1.4"/><rect x="16.5" y="5" width="2" height="3" fill="#fff"/><path d="M17.5 10V16" stroke="#fff" stroke-width="1.2"/></svg>
<svg class="a" style="left:503px;top:1048px" width="25" height="25" viewBox="0 0 25 25"><defs>
<linearGradient id="eg1" x1="0.1" y1="0" x2="0.5" y2="1"><stop offset="0" stop-color="#36c2ee"/><stop offset="1" stop-color="#1458b0"/></linearGradient>
<linearGradient id="eg2" x1="0" y1="0" x2="1" y2="0.6"><stop offset="0" stop-color="#2fb3e8"/><stop offset="1" stop-color="#5fe07a"/></linearGradient></defs>
<circle cx="12.5" cy="12.5" r="12" fill="url(#eg1)"/>
<path d="M1 11C2 5 7 0.5 13 0.5C20 0.5 24.5 6 24.5 12C24.5 15 22 16.5 19 16.5C16 16.5 14 15 14 13C14 11 16 10.5 15 9C13.5 7 9 7 6 9C3.5 10.5 2 12 1 11Z" fill="url(#eg2)"/>
<path d="M9 14C9 11 11 10 13 10.5C11 11.5 11 14 12.5 16C14 18 17.5 19 21 18C19 21 15.5 23 12 22C9.5 21 9 17 9 14Z" fill="#1a4f9c"/>
<ellipse cx="12.2" cy="14" rx="3" ry="3.2" fill="#1e3442"/>
</svg>
<svg class="a" style="left:552px;top:1050px" width="24" height="20"><path d="M0 2H9L11 4H24V20H0Z" fill="#f0c14b"/><rect x="0" y="6" width="24" height="14" fill="#ffd65c"/><rect x="6" y="11" width="12" height="9" fill="#3f9fe0"/><rect x="9" y="15" width="6" height="5" fill="#ffd65c"/></svg>
<svg class="a" style="left:601px;top:1048px" width="24" height="24" viewBox="0 0 24 24"><circle cx="12" cy="12" r="11.5" fill="#db4437"/><path d="M12 12L1.6 6.5A11.5 11.5 0 0 0 8 22.8Z" fill="#0f9d58"/><path d="M12 12L8 22.8A11.5 11.5 0 0 0 23.4 10Z" fill="#ffcd40"/><path d="M12 6.5H22.5A11.5 11.5 0 0 0 1.6 6.5" fill="#db4437"/><circle cx="12" cy="12" r="5.3" fill="#fff"/><circle cx="12" cy="12" r="4.2" fill="#4285f4"/></svg>
<div class="a" style="left:638px;top:1040px;width:44px;height:40px;background:#46555d"></div>
<div class="a" style="left:682px;top:1040px;width:2px;height:40px;background:#3a484f"></div>
<svg class="a" style="left:650px;top:1048px" width="24" height="24" viewBox="0 0 24 24"><rect x="8" y="3" width="15" height="18" fill="#fff" stroke="#1d6f42"/><path d="M13 6h8M13 9h8M13 12h8M13 15h8M13 18h8M17 4v16" stroke="#1d6f42" stroke-width="0.9"/><path d="M0 3L14 0.5V23.5L0 21Z" fill="#1d6f42"/><path d="M3.5 7.5L9.5 16.5M9.5 7.5L3.5 16.5" stroke="#fff" stroke-width="2"/></svg>
<svg class="a" style="left:699px;top:1050px" width="23" height="20"><rect x="0.5" y="0.5" width="22" height="19" fill="#000" stroke="#888"/><rect x="1" y="1" width="21" height="2" fill="#ccc"/><text x="2" y="10" font-size="6" fill="#ccc" font-family="Liberation Mono">C:\</text><path d="M13 9H19" stroke="#ccc"/></svg>
<div class="a" style="left:544px;top:1078px;width:40px;height:2px;background:#76b9ed"></div>
<div class="a" style="left:593px;top:1078px;width:32px;height:2px;background:#76b9ed"></div>
<div class="a" style="left:625px;top:1078px;width:8px;height:2px;background:#5a7ea0"></div>
<div class="a" style="left:638px;top:1078px;width:48px;height:2px;background:#76b9ed"></div>
<div class="a" style="left:691px;top:1078px;width:40px;height:2px;background:#76b9ed"></div>
<svg class="a" style="left:1548px;top:1051px" width="25" height="18"><rect x="0.75" y="0.75" width="21" height="16" rx="1.5" fill="none" stroke="#fff" stroke-width="1.5"/><path d="M22 4H24V16C24 17 23 17 22 17" fill="none" stroke="#fff" stroke-width="1.3"/><rect x="4" y="5" width="7" height="7" fill="none" stroke="#fff" stroke-width="1.3"/><path d="M13 5.5H19M13 8.5H19M13 11.5H19" stroke="#fff" stroke-width="1.3"/></svg>
<div class="a" style="left:1580px;top:1054px;font-size:14px;line-height:16px;color:#fff;">33°C&nbsp;&nbsp;Smoke</div>
<svg class="a" style="left:1677px;top:1054px" width="14" height="9"><path d="M1 8L7 2L13 8" fill="none" stroke="#fff" stroke-width="1.4"/></svg>
<svg class="a" style="left:1700px;top:1051px" width="15" height="18"><rect x="1" y="5" width="9" height="8" rx="2" fill="none" stroke="#fff" stroke-width="1.2"/><path d="M10 8L13 6V12L10 10" fill="none" stroke="#fff" stroke-width="1.2"/><path d="M3 2Q6 0 9 2M3 16Q6 18 9 16" fill="none" stroke="#fff"/></svg>
<svg class="a" style="left:1722px;top:1052px" width="18" height="16"><rect x="3.5" y="2.5" width="13" height="9" fill="none" stroke="#fff" stroke-width="1.2"/><path d="M10 11.5V14.5M6 14.5H14" stroke="#fff" stroke-width="1.2"/><rect x="0.5" y="0.5" width="4" height="4" fill="#1c2a40" stroke="#fff"/></svg>
<svg class="a" style="left:1746px;top:1052px" width="19" height="16"><path d="M1 5H4L8 1.5V14.5L4 11H1Z" fill="none" stroke="#fff" stroke-width="1.2"/><path d="M11 5Q13 8 11 11M13.5 3Q17 8 13.5 13M16 1Q20.5 8 16 15" fill="none" stroke="#fff" stroke-width="1.1"/></svg>
<div class="a" style="left:1773px;top:1045px;font-size:12px;line-height:14px;color:#fff;">ENG</div>
<div class="a" style="left:1779px;top:1062px;font-size:12px;line-height:14px;color:#fff;">US</div>
<div class="a" style="left:1813px;top:1044px;font-size:12px;line-height:14px;color:#fff;">3:56 PM</div>
<div class="a" style="left:1808px;top:1062px;font-size:12px;line-height:14px;color:#fff;">7/19/2022</div>
<svg class="a" style="left:1878px;top:1050px" width="30" height="28"><path d="M1 1H17V13H9L5 17V13H1Z" fill="#fff"/><path d="M4 4.5H14M4 7.5H14M4 10.5H11" stroke="#1c2742" stroke-width="1"/><circle cx="16.5" cy="17" r="7.5" fill="#2b2f38" stroke="#8a8f99" stroke-width="1"/><text x="13.6" y="21.3" font-size="11" fill="#fff" font-family="Liberation Sans">1</text></svg>
<div class="a" style="left:1915px;top:1040px;width:1px;height:40px;background:#5a6478"></div>
</body></html>
